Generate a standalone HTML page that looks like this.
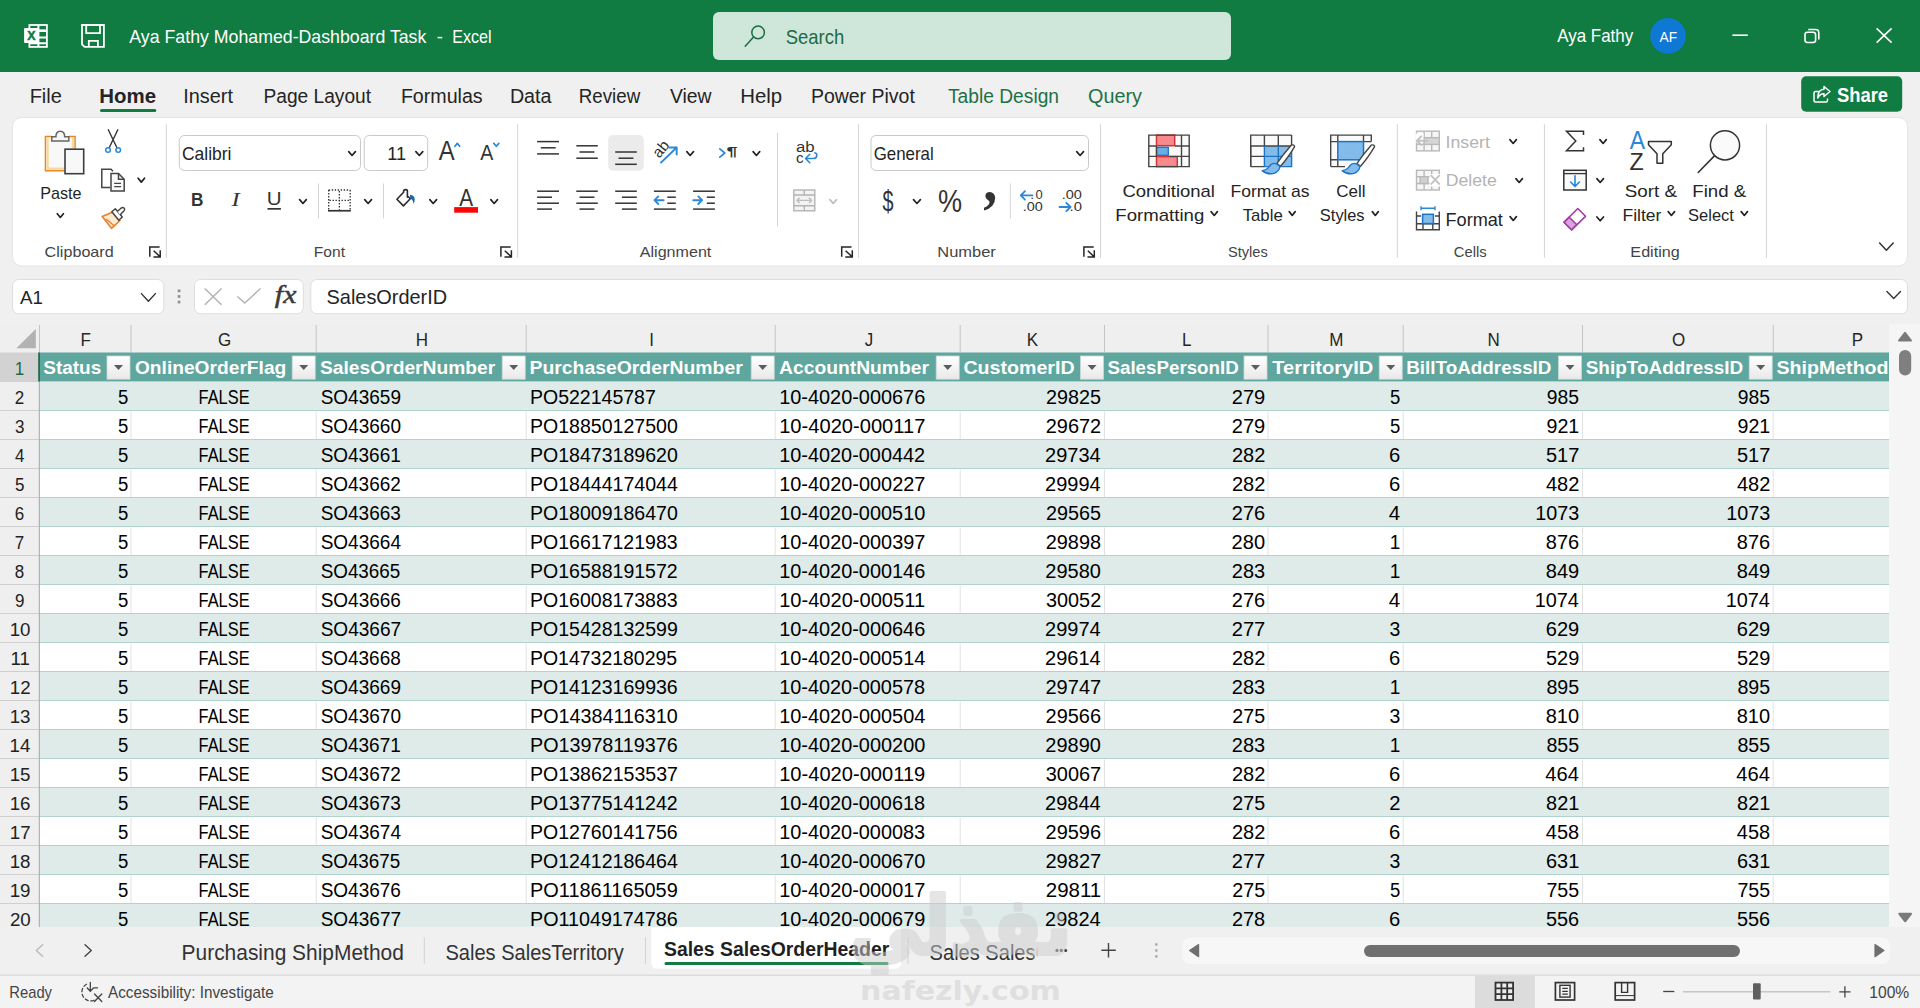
<!DOCTYPE html>
<html lang="en"><head><meta charset="utf-8"><title>Aya Fathy Mohamed-Dashboard Task - Excel</title>
<style>
html,body{margin:0;padding:0;background:#f0f0f0;overflow:hidden}
body{width:1920px;height:1008px;position:relative;font-family:"Liberation Sans",sans-serif}
svg{position:absolute;left:0;top:0;display:block;fill:#242424}
text{font-family:"Liberation Sans",sans-serif;white-space:pre}
text.b{font-weight:700}
text.i{font-style:italic}
text.s{font-family:"Liberation Serif",serif}
text.dj{font-family:"DejaVu Sans",sans-serif}
</style></head><body>
<svg width="1920" height="1008" viewBox="0 0 1920 1008" xml:space="preserve">
<g id="title-bar">
<rect x="0" y="0" width="1920" height="72" fill="#107c41"/>
<g fill="none" stroke="#fff"><rect x="29.4" y="25" width="17.5" height="21.9" stroke-width="1.8"/><path d="M38.4 25 V47" stroke-width="2"/><path d="M29 30.7 H47" stroke-width="2.6"/><path d="M29 37.5 H47 M29 43.3 H47" stroke-width="2"/></g>
<rect x="24.1" y="28" width="14.3" height="15.1" fill="#fff" rx="0.8"/>
<text x="27.2" y="40.4" font-size="12.94" textLength="8.3" lengthAdjust="spacingAndGlyphs" class="b" fill="#107c41" stroke="#107c41" stroke-width="0.5">X</text>
<g fill="none" stroke="#fff" stroke-width="1.8" stroke-linejoin="miter"><path d="M82 25 H103.9 V46.9 H84.6 L82 44.3 Z"/><path d="M86.2 25 V33.2 H100 V25"/><path d="M88.8 46.9 V40.8 H97.9 V46.9"/></g>
<text x="129.36" y="42.8" font-size="18.31" textLength="296.99" lengthAdjust="spacingAndGlyphs" fill="#fff">Aya Fathy Mohamed-Dashboard Task</text>
<text x="436.69" y="42.8" font-size="18.31" textLength="6.1" lengthAdjust="spacingAndGlyphs" fill="#fff">-</text>
<text x="452.18" y="42.8" font-size="18.31" textLength="39.39" lengthAdjust="spacingAndGlyphs" fill="#fff">Excel</text>
<rect x="713" y="12" width="518" height="48" fill="#cfe6da" rx="6"/>
<circle cx="758.1" cy="32.4" r="6.3" fill="none" stroke="#1e6b41" stroke-width="1.5"/>
<line x1="753.6" y1="37" x2="745.2" y2="46.2" stroke="#1e6b41" stroke-width="1.5" stroke-linecap="round"/>
<text x="785.67" y="43.9" font-size="20.2" textLength="58.52" lengthAdjust="spacingAndGlyphs" fill="#1e6b41">Search</text>
<text x="1557.17" y="42.2" font-size="18.6" textLength="76.07" lengthAdjust="spacingAndGlyphs" fill="#fff">Aya Fathy</text>
<circle cx="1668" cy="35.8" r="17.8" fill="#0f78d4"/>
<text x="1659.47" y="41.8" font-size="14.53" textLength="17.58" lengthAdjust="spacingAndGlyphs" fill="#fff">AF</text>
<line x1="1732.4" y1="35.2" x2="1747.8" y2="35.2" stroke="#fff" stroke-width="1.6"/>
<g fill="none" stroke="#fff" stroke-width="1.6"><rect x="1805" y="32.3" width="10.6" height="10.2" rx="2.4"/><path d="M1808.3 29.5 H1815.6 Q1818.8 29.5 1818.8 32.7 V39.4"/></g>
<path d="M1876.6 28.4 L1891.6 42.6 M1891.6 28.4 L1876.6 42.6" stroke="#fff" stroke-width="1.6" fill="none"/>
</g>
<g id="ribbon-tabs">
<rect x="0" y="72" width="1920" height="936" fill="#f0f0f0"/>
<text x="29.66" y="103.2" font-size="19.91" textLength="32.23" lengthAdjust="spacingAndGlyphs" fill="#242424">File</text>
<text x="183.17" y="103.2" font-size="19.91" textLength="49.77" lengthAdjust="spacingAndGlyphs" fill="#242424">Insert</text>
<text x="263.43" y="103.2" font-size="19.91" textLength="107.7" lengthAdjust="spacingAndGlyphs" fill="#242424">Page Layout</text>
<text x="400.89" y="103.2" font-size="19.91" textLength="81.81" lengthAdjust="spacingAndGlyphs" fill="#242424">Formulas</text>
<text x="509.89" y="103.2" font-size="19.91" textLength="41.6" lengthAdjust="spacingAndGlyphs" fill="#242424">Data</text>
<text x="578.76" y="103.2" font-size="19.91" textLength="61.48" lengthAdjust="spacingAndGlyphs" fill="#242424">Review</text>
<text x="669.92" y="103.2" font-size="19.91" textLength="41.63" lengthAdjust="spacingAndGlyphs" fill="#242424">View</text>
<text x="740.23" y="103.2" font-size="19.91" textLength="41.9" lengthAdjust="spacingAndGlyphs" fill="#242424">Help</text>
<text x="810.9" y="103.2" font-size="19.91" textLength="103.92" lengthAdjust="spacingAndGlyphs" fill="#242424">Power Pivot</text>
<text x="99.25" y="103.2" font-size="19.91" textLength="56.75" lengthAdjust="spacingAndGlyphs" class="b" fill="#242424">Home</text>
<rect x="100" y="109" width="56.3" height="3" fill="#107c41" rx="1.5"/>
<text x="947.98" y="103.2" font-size="19.91" textLength="111.06" lengthAdjust="spacingAndGlyphs" fill="#1e7145">Table Design</text>
<text x="1088.07" y="103.2" font-size="19.91" textLength="53.87" lengthAdjust="spacingAndGlyphs" fill="#1e7145">Query</text>
<rect x="1801.2" y="76.2" width="101" height="35.6" fill="#107c41" rx="5"/>
<g fill="none" stroke="#fff" stroke-width="1.5" stroke-linejoin="round" stroke-linecap="round"><path d="M1818.5 91.5 H1815.5 Q1814 91.5 1814 93 V100.5 Q1814 102 1815.5 102 H1826 Q1827.5 102 1827.5 100.5 V99"/><path d="M1824 86.5 L1830 91.5 L1824 96.5 V93.7 Q1819.5 93.7 1817.8 98 Q1817.8 89.5 1824 89.3 Z"/></g>
<text x="1836.88" y="101.9" font-size="19.33" textLength="51.15" lengthAdjust="spacingAndGlyphs" class="b" fill="#fff">Share</text>
</g>
<rect x="12.5" y="117.5" width="1895" height="148.5" fill="#fff" rx="9" stroke="#e4e4e4" stroke-width="1"/>
<g id="group-clipboard">
<path d="M45.3 136.4 H75.2 V149 H64.3 V170.8 H45.3 Z" fill="#f8f8f8"/><path d="M47.6 138 V168.6 H64 M73 138 V148.6" fill="none" stroke="#fbd79a" stroke-width="2.2"/><path d="M52 136.5 H45.4 V170.8 H64.3 M69 136.5 H75.1 V148.8" fill="none" stroke="#e48a22" stroke-width="1.4"/><path d="M51.8 141 V136.8 H55.9 Q56 131.3 60.3 131.3 Q64.6 131.3 64.7 136.8 H68.8 V141 Z" fill="#f6f6f6" stroke="#666" stroke-width="1.5"/><rect x="65" y="149.2" width="18.7" height="24.5" fill="#f8f8f8" stroke="#3d3d3d" stroke-width="1.6"/>
<text x="40.18" y="198.6" font-size="17.15" textLength="41.23" lengthAdjust="spacingAndGlyphs" fill="#242424">Paste</text>
<path d="M57.3 213.75 L60.35 217.45 L63.4 213.75" fill="none" stroke="#222" stroke-width="1.7" stroke-linecap="round" stroke-linejoin="round"/>
<g fill="none" stroke="#333" stroke-width="1.4" stroke-linecap="round"><path d="M108.3 129.8 L116.8 147.5 M117.8 129.8 L109.3 147.5"/></g><circle cx="108" cy="150" r="2.3" fill="none" stroke="#2b88d8" stroke-width="1.5"/><circle cx="118.2" cy="150" r="2.3" fill="none" stroke="#2b88d8" stroke-width="1.5"/>
<g fill="none" stroke="#444" stroke-width="1.5"><path d="M110 187.5 H101.8 V169.3 H111 L113 171.3"/><path d="M111 173.5 H118.5 L124.2 179.2 V191 H111 Z" fill="#fafafa"/><path d="M118.5 173.5 V179.2 H124.2" /><path d="M114.2 183.3 H121 M114.2 186.6 H121" stroke-width="1.2"/></g>
<path d="M138.1 178.25 L141.3 182.15 L144.5 178.25" fill="none" stroke="#222" stroke-width="1.7" stroke-linecap="round" stroke-linejoin="round"/>
<g stroke-linejoin="round"><path d="M102.2 216.5 L113 212 L120 220.5 L111.5 228.3 Z" fill="#fce9d2" stroke="#e8802a" stroke-width="1.6"/><path d="M106 219 L114.5 226" stroke="#e8802a" stroke-width="1.3" fill="none"/><path d="M111.8 211.8 L115.3 208.7 L122.3 217 L118.8 220.2 Z" fill="#fff" stroke="#444" stroke-width="1.5"/><path d="M117.5 211.3 L121.3 208 Q123.5 206.8 124.5 208.6 Q125.2 210.2 123.3 211.6 L120 215" fill="#fff" stroke="#444" stroke-width="1.5"/></g>
<text x="44.59" y="256.7" font-size="15.12" textLength="69.15" lengthAdjust="spacingAndGlyphs" fill="#444">Clipboard</text>
<path d="M149.8 256.7 V246.9 H159.6" fill="none" stroke="#262626" stroke-width="1.5"/>
<path d="M153.7 250.7 L160.2 256.9 M160.2 250.3 V257 H153.4" fill="none" stroke="#262626" stroke-width="1.5"/>
<line x1="166.3" y1="124.3" x2="166.3" y2="257.8" stroke="#d4d4d4" stroke-width="1"/>
</g>
<g id="group-font">
<rect x="179.3" y="135.5" width="181.2" height="35" fill="#fff" rx="5" stroke="#c9c9c9" stroke-width="1"/>
<text x="181.93" y="159.7" font-size="18.17" textLength="49.55" lengthAdjust="spacingAndGlyphs" fill="#242424">Calibri</text>
<path d="M348.7 151.65 L352.05 155.45 L355.4 151.65" fill="none" stroke="#222" stroke-width="1.7" stroke-linecap="round" stroke-linejoin="round"/>
<rect x="364.2" y="135.5" width="63.5" height="35" fill="#fff" rx="5" stroke="#c9c9c9" stroke-width="1"/>
<text x="387.22" y="159.7" font-size="18.17" textLength="18.85" lengthAdjust="spacingAndGlyphs" fill="#242424">11</text>
<path d="M415.9 151.65 L419.35 155.45 L422.8 151.65" fill="none" stroke="#222" stroke-width="1.7" stroke-linecap="round" stroke-linejoin="round"/>
<text x="438.75" y="160.4" font-size="27.91" textLength="15.9" lengthAdjust="spacingAndGlyphs" fill="#333">A</text>
<path d="M454.9 146.25 L457.3 143.35 L459.7 146.25" fill="none" stroke="#2b88d8" stroke-width="1.7" stroke-linecap="round" stroke-linejoin="round"/>
<text x="480.16" y="160.4" font-size="21.8" textLength="13.08" lengthAdjust="spacingAndGlyphs" fill="#333">A</text>
<path d="M493.8 143.35 L496.3 146.25 L498.8 143.35" fill="none" stroke="#2b88d8" stroke-width="1.7" stroke-linecap="round" stroke-linejoin="round"/>
<text x="191.07" y="206.1" font-size="18.9" textLength="12.41" lengthAdjust="spacingAndGlyphs" class="b" fill="#333">B</text>
<text x="231.6" y="206.3" font-size="19.77" textLength="8.21" lengthAdjust="spacingAndGlyphs" class="i s" fill="#333">I</text>
<text x="266.72" y="204.8" font-size="18.02" textLength="14.85" lengthAdjust="spacingAndGlyphs" fill="#333">U</text>
<rect x="267.5" y="208" width="13.4" height="1.7" fill="#333"/>
<path d="M299.6 199.65 L302.95 203.45 L306.3 199.65" fill="none" stroke="#222" stroke-width="1.7" stroke-linecap="round" stroke-linejoin="round"/>
<line x1="318.5" y1="183.5" x2="318.5" y2="218.4" stroke="#d4d4d4" stroke-width="1"/>
<g stroke="#333" fill="none" stroke-width="1.3" stroke-dasharray="1.4 1.6"><path d="M328.7 190 H350.2 M328.7 190 V209.8 M350.2 190 V209.8 M339.4 191 V209.8 M329.5 200.3 H350"/></g>
<rect x="328" y="209.9" width="22.8" height="1.7" fill="#333"/>
<path d="M364.7 199.65 L368.1 203.45 L371.5 199.65" fill="none" stroke="#222" stroke-width="1.7" stroke-linecap="round" stroke-linejoin="round"/>
<line x1="383.5" y1="183.5" x2="383.5" y2="218.4" stroke="#d4d4d4" stroke-width="1"/>
<path d="M407.4 197.2 V191.1 Q407.4 189.6 405.5 189.6 Q403.6 189.6 403.6 191.4 V192.3 L396.9 199.2 L403.4 205.9 L410.3 198.8 L408.4 196.8" fill="none" stroke="#2b2b2b" stroke-width="1.6" stroke-linejoin="round" stroke-linecap="round"/><path d="M410 194.8 Q414.9 195.2 414.7 200 Q414.5 202.6 413.5 203.9 Q413.2 199.8 410.2 198.2 Z" fill="#1567b5"/>
<path d="M429.8 199.65 L433.2 203.45 L436.6 199.65" fill="none" stroke="#222" stroke-width="1.7" stroke-linecap="round" stroke-linejoin="round"/>
<text x="459.36" y="205.5" font-size="23.26" textLength="13.88" lengthAdjust="spacingAndGlyphs" fill="#333">A</text>
<rect x="454.2" y="207.1" width="23.8" height="5.6" fill="#fb0509"/>
<path d="M490.8 199.65 L494.15 203.45 L497.5 199.65" fill="none" stroke="#222" stroke-width="1.7" stroke-linecap="round" stroke-linejoin="round"/>
<text x="313.82" y="256.7" font-size="15.12" textLength="31.19" lengthAdjust="spacingAndGlyphs" fill="#444">Font</text>
<path d="M500.9 256.7 V246.9 H510.7" fill="none" stroke="#262626" stroke-width="1.5"/>
<path d="M504.8 250.7 L511.4 256.9 M511.4 250.3 V257 H504.5" fill="none" stroke="#262626" stroke-width="1.5"/>
<line x1="517.7" y1="124.3" x2="517.7" y2="257.8" stroke="#d4d4d4" stroke-width="1"/>
</g>
<g id="group-alignment">
<line x1="537.1" y1="141.6" x2="559" y2="141.6" stroke="#333" stroke-width="1.5"/>
<line x1="540.8" y1="147.8" x2="555.7" y2="147.8" stroke="#333" stroke-width="1.5"/>
<line x1="537.1" y1="153.9" x2="559" y2="153.9" stroke="#333" stroke-width="1.5"/>
<line x1="576.3" y1="145.8" x2="597.8" y2="145.8" stroke="#333" stroke-width="1.5"/>
<line x1="579.5" y1="152" x2="594.4" y2="152" stroke="#333" stroke-width="1.5"/>
<line x1="576.3" y1="158.2" x2="597.8" y2="158.2" stroke="#333" stroke-width="1.5"/>
<rect x="608.1" y="135.1" width="35.7" height="35.7" fill="#ebebeb" rx="5"/>
<line x1="615.2" y1="152" x2="636.8" y2="152" stroke="#333" stroke-width="1.5"/>
<line x1="618.5" y1="158.2" x2="633.4" y2="158.2" stroke="#333" stroke-width="1.5"/>
<line x1="615.2" y1="164.3" x2="636.8" y2="164.3" stroke="#333" stroke-width="1.5"/>
<g transform="translate(659.3 158.8) rotate(-50)"><text x="0" y="0" font-size="15.5" textLength="17" lengthAdjust="spacingAndGlyphs" fill="#333">ab</text></g>
<path d="M661 162.6 L676.4 147.8 M669.6 147.5 H676.7 V154.5" fill="none" stroke="#2b88d8" stroke-width="1.9" stroke-linecap="round" stroke-linejoin="round"/>
<path d="M686.8 151.65 L690.15 155.45 L693.5 151.65" fill="none" stroke="#222" stroke-width="1.7" stroke-linecap="round" stroke-linejoin="round"/>
<path d="M719.8 148.8 L724.8 153 L719.8 157.2" fill="none" stroke="#2b88d8" stroke-width="1.7" stroke-linecap="round" stroke-linejoin="round"/>
<text x="726.43" y="156.2" font-size="13.37" textLength="11.03" lengthAdjust="spacingAndGlyphs" class="b" fill="#333">¶</text>
<path d="M753.1 151.65 L756.4 155.45 L759.7 151.65" fill="none" stroke="#222" stroke-width="1.7" stroke-linecap="round" stroke-linejoin="round"/>
<line x1="537.1" y1="191.2" x2="559" y2="191.2" stroke="#333" stroke-width="1.5"/>
<line x1="537.1" y1="197.2" x2="552" y2="197.2" stroke="#333" stroke-width="1.5"/>
<line x1="537.1" y1="203.2" x2="559" y2="203.2" stroke="#333" stroke-width="1.5"/>
<line x1="537.1" y1="209.1" x2="552" y2="209.1" stroke="#333" stroke-width="1.5"/>
<line x1="576.3" y1="191.2" x2="597.8" y2="191.2" stroke="#333" stroke-width="1.5"/>
<line x1="579.5" y1="197.2" x2="594.4" y2="197.2" stroke="#333" stroke-width="1.5"/>
<line x1="576.3" y1="203.2" x2="597.8" y2="203.2" stroke="#333" stroke-width="1.5"/>
<line x1="579.5" y1="209.1" x2="594.4" y2="209.1" stroke="#333" stroke-width="1.5"/>
<line x1="615.2" y1="191.2" x2="636.8" y2="191.2" stroke="#333" stroke-width="1.5"/>
<line x1="621.9" y1="197.2" x2="636.8" y2="197.2" stroke="#333" stroke-width="1.5"/>
<line x1="615.2" y1="203.2" x2="636.8" y2="203.2" stroke="#333" stroke-width="1.5"/>
<line x1="621.9" y1="209.1" x2="636.8" y2="209.1" stroke="#333" stroke-width="1.5"/>
<line x1="653.9" y1="191.2" x2="675.8" y2="191.2" stroke="#333" stroke-width="1.5"/>
<line x1="667.3" y1="197.2" x2="675.8" y2="197.2" stroke="#333" stroke-width="1.5"/>
<line x1="667.3" y1="203.2" x2="675.8" y2="203.2" stroke="#333" stroke-width="1.5"/>
<line x1="653.9" y1="209.1" x2="675.8" y2="209.1" stroke="#333" stroke-width="1.5"/>
<path d="M663.6 200.2 H654.6 M658.3 196.4 L654.5 200.2 L658.3 204" fill="none" stroke="#2b88d8" stroke-width="1.9" stroke-linecap="round" stroke-linejoin="round"/>
<line x1="693.1" y1="191.2" x2="714.9" y2="191.2" stroke="#333" stroke-width="1.5"/>
<line x1="706.8" y1="197.2" x2="714.9" y2="197.2" stroke="#333" stroke-width="1.5"/>
<line x1="706.8" y1="203.2" x2="714.9" y2="203.2" stroke="#333" stroke-width="1.5"/>
<line x1="693.1" y1="209.1" x2="714.9" y2="209.1" stroke="#333" stroke-width="1.5"/>
<path d="M693.3 200.2 H702 M698.3 196.4 L702.1 200.2 L698.3 204" fill="none" stroke="#2b88d8" stroke-width="1.9" stroke-linecap="round" stroke-linejoin="round"/>
<line x1="777.5" y1="132.9" x2="777.5" y2="226.6" stroke="#d4d4d4" stroke-width="1"/>
<text x="795.99" y="151.5" font-size="14" textLength="18.7" lengthAdjust="spacingAndGlyphs" fill="#333">ab</text>
<text x="796.06" y="162.7" font-size="14" textLength="7.64" lengthAdjust="spacingAndGlyphs" fill="#333">c</text>
<path d="M805.6 158.5 H813.5 Q816.8 158.3 816.8 155.3 Q816.8 153.2 814.8 152.8 M809.8 154.3 L805.5 158.5 L809.8 162.8" fill="none" stroke="#2b88d8" stroke-width="1.6" stroke-linecap="round" stroke-linejoin="round"/>
<g fill="#f3f3f3" stroke="#b4b4b4" stroke-width="1.4"><rect x="793.8" y="190" width="21" height="20.8"/><path d="M793.8 195 H814.8 M793.8 205.8 H814.8 M804.3 190 V195 M804.3 205.8 V210.8" fill="none"/><path d="M797 200.4 H811.6 M799.6 197.8 L797 200.4 L799.6 203 M809 197.8 L811.6 200.4 L809 203" fill="none" stroke="#bdbdbd"/></g>
<path d="M829.9 199.65 L833.25 203.45 L836.6 199.65" fill="none" stroke="#bdbdbd" stroke-width="1.7" stroke-linecap="round" stroke-linejoin="round"/>
<text x="639.77" y="256.7" font-size="15.12" textLength="71.54" lengthAdjust="spacingAndGlyphs" fill="#444">Alignment</text>
<path d="M841.7 256.7 V246.9 H851.5" fill="none" stroke="#262626" stroke-width="1.5"/>
<path d="M845.6 250.7 L852.3 256.9 M852.3 250.3 V257 H845.3" fill="none" stroke="#262626" stroke-width="1.5"/>
<line x1="858.6" y1="124.3" x2="858.6" y2="257.8" stroke="#d4d4d4" stroke-width="1"/>
</g>
<g id="group-number">
<rect x="871" y="135.5" width="217.5" height="35" fill="#fff" rx="5" stroke="#c9c9c9" stroke-width="1"/>
<text x="873.76" y="159.7" font-size="18.17" textLength="59.97" lengthAdjust="spacingAndGlyphs" fill="#242424">General</text>
<path d="M1076.7 151.65 L1080.1 155.45 L1083.5 151.65" fill="none" stroke="#222" stroke-width="1.7" stroke-linecap="round" stroke-linejoin="round"/>
<text x="882.5" y="211.07" font-size="29.42" textLength="11" lengthAdjust="spacingAndGlyphs" fill="#333">$</text>
<path d="M913.5 199.65 L916.95 203.45 L920.4 199.65" fill="none" stroke="#222" stroke-width="1.7" stroke-linecap="round" stroke-linejoin="round"/>
<text x="937.95" y="211.91" font-size="30.86" textLength="24.1" lengthAdjust="spacingAndGlyphs" fill="#333">%</text>
<text x="983.37" y="201.06" font-size="60.26" textLength="14.07" lengthAdjust="spacingAndGlyphs" class="b s" fill="#333">,</text>
<line x1="1010.3" y1="183.5" x2="1010.3" y2="218.4" stroke="#d4d4d4" stroke-width="1"/>
<text x="1035.4" y="198.7" font-size="13.6" textLength="7.2" lengthAdjust="spacingAndGlyphs" fill="#333">0</text>
<text x="1030.26" y="198.7" font-size="13.6" textLength="3.78" lengthAdjust="spacingAndGlyphs" fill="#333">.</text>
<text x="1022.69" y="211.4" font-size="13.6" textLength="20.06" lengthAdjust="spacingAndGlyphs" fill="#333">.00</text>
<path d="M1021 195.4 H1032.5 M1025 191.2 L1020.8 195.4 L1025 199.6" fill="none" stroke="#2b88d8" stroke-width="1.8" stroke-linecap="round" stroke-linejoin="round"/>
<text x="1061.78" y="198.7" font-size="13.6" textLength="20.17" lengthAdjust="spacingAndGlyphs" fill="#333">.00</text>
<text x="1069.54" y="211.4" font-size="13.6" textLength="12.42" lengthAdjust="spacingAndGlyphs" fill="#333">.0</text>
<path d="M1059.5 207 H1070.5 M1066.3 202.8 L1070.6 207 L1066.3 211.2" fill="none" stroke="#2b88d8" stroke-width="1.8" stroke-linecap="round" stroke-linejoin="round"/>
<text x="937.25" y="256.7" font-size="15.12" textLength="58.61" lengthAdjust="spacingAndGlyphs" fill="#444">Number</text>
<path d="M1083.9 256.7 V246.9 H1093.7" fill="none" stroke="#262626" stroke-width="1.5"/>
<path d="M1087.8 250.7 L1094.3 256.9 M1094.3 250.3 V257 H1087.5" fill="none" stroke="#262626" stroke-width="1.5"/>
<line x1="1100.5" y1="124.3" x2="1100.5" y2="257.8" stroke="#d4d4d4" stroke-width="1"/>
</g>
<g id="group-styles">
<rect x="1148.8" y="135.1" width="40.4" height="31.5" fill="#fafafa"/>
<rect x="1156.5" y="135.1" width="18.2" height="10.6" fill="#f8898c" stroke="#d13438" stroke-width="1.5"/>
<rect x="1156.5" y="156.6" width="20.8" height="10" fill="#f8898c" stroke="#d13438" stroke-width="1.5"/>
<rect x="1156.5" y="147.3" width="11.8" height="8" fill="#69afe5" stroke="#1e74c4" stroke-width="1.3"/>
<g stroke="#444" stroke-width="1.4" fill="none"><path d="M1148.8 135.1 H1189.2 V166.6 H1148.8 Z"/><path d="M1148.8 146 H1156 M1148.8 156.4 H1156 M1156.5 146 V156.5 M1175 146 H1189.2 M1169 156.4 H1189.2 M1181.5 135.1 V166.6 M1177.5 156.4 H1189"/></g>
<text x="1122.48" y="197" font-size="17.15" textLength="92.45" lengthAdjust="spacingAndGlyphs" fill="#242424">Conditional</text>
<text x="1115.37" y="221.3" font-size="17.15" textLength="88.92" lengthAdjust="spacingAndGlyphs" fill="#242424">Formatting</text>
<path d="M1211.1 211.65 L1214.25 215.45 L1217.4 211.65" fill="none" stroke="#222" stroke-width="1.7" stroke-linecap="round" stroke-linejoin="round"/>
<rect x="1250.7" y="135.1" width="40.9" height="31.5" fill="#fafafa"/>
<rect x="1264.4" y="146" width="27.2" height="20.6" fill="#83bbeb"/>
<g stroke="#444" stroke-width="1.4" fill="none"><path d="M1250.7 166.6 V135.1 H1291.6 M1291.6 135.1 V146 H1250.7"/><path d="M1264.4 135.1 V146 M1278.3 135.1 V146 M1250.7 156.4 H1264.4 M1250.7 166.6 H1264.4 M1250.7 146 V166.6"/></g>
<g stroke="#1e74c4" stroke-width="1.4" fill="none"><path d="M1264.4 146 V166.6 H1291.6 V146 M1278.3 146 V166.6 M1264.4 156.4 H1291.6"/></g>
<g transform="translate(0 0)"><path d="M1291.2 145.2 Q1294.2 144.2 1294.6 146.6 Q1287.5 158.5 1280.5 166.2 L1276.8 163.6 Q1283 154.5 1291.2 145.2 Z" fill="#fff" stroke="#444" stroke-width="1.4" stroke-linejoin="round"/><path d="M1276.4 163.8 Q1272.2 162.3 1269.6 166 Q1267.6 169.8 1262.2 170.6 Q1266.8 174.6 1273 173.6 Q1279.2 172 1280 166.4 Z" fill="#83bbeb" stroke="#1e74c4" stroke-width="1.4" stroke-linejoin="round"/></g>
<text x="1230.56" y="197" font-size="17.15" textLength="78.97" lengthAdjust="spacingAndGlyphs" fill="#242424">Format as</text>
<text x="1242.63" y="221.3" font-size="17.15" textLength="40.12" lengthAdjust="spacingAndGlyphs" fill="#242424">Table</text>
<path d="M1289.2 211.65 L1292.2 215.45 L1295.2 211.65" fill="none" stroke="#222" stroke-width="1.7" stroke-linecap="round" stroke-linejoin="round"/>
<rect x="1330.7" y="135.1" width="40.6" height="31.5" fill="#fafafa"/>
<rect x="1337.8" y="141.6" width="25.7" height="18.2" fill="#83bbeb" stroke="#1e74c4" stroke-width="1.5"/>
<g stroke="#444" stroke-width="1.4" fill="none"><path d="M1330.7 166.6 V135.1 H1371.3 V141.6 M1330.7 141.6 H1337.3 M1364 141.6 H1371.3 M1337.8 135.1 V141 M1363.5 135.1 V141 M1330.7 159.8 H1337.3 M1337.8 160.3 V166.6 M1330.7 166.6 H1345"/></g>
<g transform="translate(80 0)"><path d="M1291.2 145.2 Q1294.2 144.2 1294.6 146.6 Q1287.5 158.5 1280.5 166.2 L1276.8 163.6 Q1283 154.5 1291.2 145.2 Z" fill="#fff" stroke="#444" stroke-width="1.4" stroke-linejoin="round"/><path d="M1276.4 163.8 Q1272.2 162.3 1269.6 166 Q1267.6 169.8 1262.2 170.6 Q1266.8 174.6 1273 173.6 Q1279.2 172 1280 166.4 Z" fill="#83bbeb" stroke="#1e74c4" stroke-width="1.4" stroke-linejoin="round"/></g>
<text x="1336.35" y="197" font-size="17.15" textLength="29.27" lengthAdjust="spacingAndGlyphs" fill="#242424">Cell</text>
<text x="1319.86" y="221.3" font-size="17.15" textLength="44.73" lengthAdjust="spacingAndGlyphs" fill="#242424">Styles</text>
<path d="M1372.3 211.65 L1375.3 215.45 L1378.3 211.65" fill="none" stroke="#222" stroke-width="1.7" stroke-linecap="round" stroke-linejoin="round"/>
<text x="1227.94" y="257" font-size="15.12" textLength="39.79" lengthAdjust="spacingAndGlyphs" fill="#444">Styles</text>
<line x1="1397.3" y1="124.3" x2="1397.3" y2="257.8" stroke="#d4d4d4" stroke-width="1"/>
</g>
<g id="group-cells">
<g stroke="#b9b9b9" stroke-width="1.4" fill="none"><rect x="1416.5" y="131.2" width="22.8" height="19.7" fill="#f6f6f6"/><path d="M1416.5 137.7 H1439.3 M1416.5 144.4 H1439.3 M1424.1 131.2 V150.9 M1431.7 131.2 V150.9"/></g>
<rect x="1424.1" y="137.7" width="15.2" height="6.7" fill="#d6d6d6" stroke="#b9b9b9" stroke-width="1.4"/>
<rect x="1415.5" y="133.5" width="8" height="9" fill="#fff"/>
<path d="M1417 140.7 H1427.4 M1421.2 136.4 L1416.9 140.7 L1421.2 145" fill="none" stroke="#c2c2c2" stroke-width="2" stroke-linecap="round" stroke-linejoin="round"/>
<text x="1445.57" y="147.7" font-size="16.86" textLength="44.25" lengthAdjust="spacingAndGlyphs" fill="#b3b3b3">Insert</text>
<path d="M1509.9 139.65 L1513.15 143.45 L1516.4 139.65" fill="none" stroke="#222" stroke-width="1.7" stroke-linecap="round" stroke-linejoin="round"/>
<g stroke="#b9b9b9" stroke-width="1.4" fill="none"><rect x="1416.5" y="170.3" width="22.8" height="19.7" fill="#f6f6f6"/><path d="M1416.5 176.8 H1439.3 M1416.5 183.5 H1439.3 M1424.1 170.3 V190 M1431.7 170.3 V190"/></g>
<rect x="1420" y="176.8" width="8" height="6.7" fill="#d0d0d0" stroke="#b9b9b9" stroke-width="1.4"/>
<rect x="1429.5" y="174" width="11.5" height="12.5" fill="#fff"/>
<path d="M1431.2 175.6 L1439.2 183.9 M1439.2 175.6 L1431.2 183.9" fill="none" stroke="#c2c2c2" stroke-width="1.9" stroke-linecap="round"/>
<text x="1445.75" y="186.3" font-size="16.86" textLength="51.04" lengthAdjust="spacingAndGlyphs" fill="#b3b3b3">Delete</text>
<path d="M1515.9 178.65 L1519.15 182.45 L1522.4 178.65" fill="none" stroke="#222" stroke-width="1.7" stroke-linecap="round" stroke-linejoin="round"/>
<g stroke="#444" stroke-width="1.4" fill="none"><path d="M1416.5 211.5 V229.8 H1439.3 V211.5 M1416.5 223.8 H1439.3 M1416.5 216 H1421 M1435 216 H1439.3 M1423 224 V229.8 M1432.8 224 V229.8"/></g>
<rect x="1422.6" y="214.3" width="10.8" height="9.3" fill="#83bbeb" stroke="#1e74c4" stroke-width="1.5"/>
<path d="M1421 208.2 H1435 M1421 206.3 V210.2 M1435 206.3 V210.2" fill="none" stroke="#2b88d8" stroke-width="1.4"/>
<text x="1445.51" y="225.5" font-size="17.44" textLength="57.41" lengthAdjust="spacingAndGlyphs" fill="#242424">Format</text>
<path d="M1510.1 216.65 L1513.25 220.45 L1516.4 216.65" fill="none" stroke="#222" stroke-width="1.7" stroke-linecap="round" stroke-linejoin="round"/>
<text x="1453.76" y="257" font-size="15.12" textLength="32.87" lengthAdjust="spacingAndGlyphs" fill="#444">Cells</text>
<line x1="1544.4" y1="124.3" x2="1544.4" y2="257.8" stroke="#d4d4d4" stroke-width="1"/>
</g>
<g id="group-editing">
<path d="M1583.5 135 V131.3 H1566.5 L1575.8 141 L1566.5 150.8 H1583.5 V147.2" fill="none" stroke="#333" stroke-width="1.5" stroke-linejoin="miter"/>
<path d="M1599.9 139.65 L1603.1 143.45 L1606.3 139.65" fill="none" stroke="#222" stroke-width="1.7" stroke-linecap="round" stroke-linejoin="round"/>
<rect x="1563.8" y="170.3" width="22.4" height="19.7" fill="#fafafa" stroke="#333" stroke-width="1.5"/><path d="M1563.8 173.6 H1586.2" stroke="#333" stroke-width="1.3"/>
<path d="M1575 175.8 V186.3 M1570.6 182 L1575 186.4 L1579.4 182" fill="none" stroke="#2b88d8" stroke-width="1.6" stroke-linecap="round" stroke-linejoin="round"/>
<path d="M1596.9 178.65 L1600.2 182.45 L1603.5 178.65" fill="none" stroke="#222" stroke-width="1.7" stroke-linecap="round" stroke-linejoin="round"/>
<path d="M1577.8 208.5 L1585.5 216.3 L1571.5 229.8 L1564 222.3 Z" fill="#fff" stroke="#a23aa8" stroke-width="1.6" stroke-linejoin="round"/><path d="M1569.3 217.2 L1576.8 224.7 L1571.5 229.8 L1564 222.3 Z" fill="#dba3de" stroke="#a23aa8" stroke-width="1.6" stroke-linejoin="round"/>
<path d="M1596.9 216.95 L1600.2 220.75 L1603.5 216.95" fill="none" stroke="#222" stroke-width="1.7" stroke-linecap="round" stroke-linejoin="round"/>
<text x="1629.75" y="149.2" font-size="25" textLength="15.29" lengthAdjust="spacingAndGlyphs" fill="#2b88d8">A</text>
<text x="1629.58" y="170.2" font-size="24.42" textLength="14.24" lengthAdjust="spacingAndGlyphs" fill="#333">Z</text>
<path d="M1648.5 141.5 H1671.3 V144.8 L1662.8 153.8 V163.3 H1657 V153.8 L1648.5 144.8 Z" fill="#fafafa" stroke="#333" stroke-width="1.5" stroke-linejoin="round"/>
<text x="1624.75" y="197" font-size="17.15" textLength="52.22" lengthAdjust="spacingAndGlyphs" fill="#242424">Sort &amp;</text>
<text x="1622.46" y="221.3" font-size="17.15" textLength="38.92" lengthAdjust="spacingAndGlyphs" fill="#242424">Filter</text>
<path d="M1668.2 211.65 L1671.4 215.45 L1674.6 211.65" fill="none" stroke="#222" stroke-width="1.7" stroke-linecap="round" stroke-linejoin="round"/>
<circle cx="1725" cy="145.3" r="14.6" fill="#fafafa" stroke="#333" stroke-width="1.5"/>
<line x1="1714.4" y1="155.9" x2="1698.2" y2="172.5" stroke="#333" stroke-width="1.6" stroke-linecap="round"/>
<text x="1692.27" y="197" font-size="17.15" textLength="53.81" lengthAdjust="spacingAndGlyphs" fill="#242424">Find &amp;</text>
<text x="1688.06" y="221.3" font-size="17.15" textLength="45.86" lengthAdjust="spacingAndGlyphs" fill="#242424">Select</text>
<path d="M1741.2 211.65 L1744.35 215.45 L1747.5 211.65" fill="none" stroke="#222" stroke-width="1.7" stroke-linecap="round" stroke-linejoin="round"/>
<text x="1630.38" y="257" font-size="15.12" textLength="49.37" lengthAdjust="spacingAndGlyphs" fill="#444">Editing</text>
<line x1="1766.4" y1="124.3" x2="1766.4" y2="257.8" stroke="#d4d4d4" stroke-width="1"/>
<path d="M1879.6 243 L1886.4 250.2 L1893.2 243" fill="none" stroke="#333" stroke-width="1.5" stroke-linecap="round" stroke-linejoin="round"/>
</g>
<g id="formula-bar">
<rect x="12.5" y="279.5" width="151.3" height="34.2" fill="#fff" rx="6" stroke="#dedede" stroke-width="1"/>
<text x="19.96" y="303.7" font-size="18.9" textLength="22.94" lengthAdjust="spacingAndGlyphs" fill="#242424">A1</text>
<path d="M141.4 293.6 L148.4 301.2 L155.4 293.6" fill="none" stroke="#333" stroke-width="1.4" stroke-linecap="round" stroke-linejoin="round"/>
<rect x="177.7" y="289.5" width="2.7" height="2.7" fill="#8f8f8f"/>
<rect x="177.7" y="295.1" width="2.7" height="2.7" fill="#8f8f8f"/>
<rect x="177.7" y="300.7" width="2.7" height="2.7" fill="#8f8f8f"/>
<rect x="194.5" y="279.5" width="108.8" height="34.2" fill="#fff" rx="6" stroke="#dedede" stroke-width="1"/>
<path d="M204.8 288.5 L221.5 304.8 M221.5 288.5 L204.8 304.8" fill="none" stroke="#b4b4b4" stroke-width="1.5"/>
<path d="M237.3 296.5 L244.8 303 L260.5 288.5" fill="none" stroke="#b4b4b4" stroke-width="1.5"/>
<text x="274.87" y="302.72" font-size="25.74" textLength="21.53" lengthAdjust="spacingAndGlyphs" class="i s" fill="#3a3a3a" stroke="#3a3a3a" stroke-width="0.5">fx</text>
<rect x="310.8" y="279.5" width="1596.7" height="34.2" fill="#fff" rx="6" stroke="#dedede" stroke-width="1"/>
<text x="326.6" y="303.7" font-size="19.48" textLength="120.54" lengthAdjust="spacingAndGlyphs" fill="#242424">SalesOrderID</text>
<path d="M1886.9 291.4 L1893.7 298.6 L1900.5 291.4" fill="none" stroke="#333" stroke-width="1.4" stroke-linecap="round" stroke-linejoin="round"/>
</g>
<g id="grid">
<rect x="0" y="324" width="1889" height="604" fill="#efefef"/>
<path d="M35.8 329 V348.3 H16.3 Z" fill="#b2b2b2"/>
<text x="80.5" y="346.2" font-size="18.9" textLength="10.39" lengthAdjust="spacingAndGlyphs" fill="#262626">F</text>
<text x="217.99" y="346.2" font-size="18.9" textLength="13.23" lengthAdjust="spacingAndGlyphs" fill="#262626">G</text>
<text x="415.85" y="346.2" font-size="18.9" textLength="12.28" lengthAdjust="spacingAndGlyphs" fill="#262626">H</text>
<text x="649.14" y="346.2" font-size="18.9" textLength="4.72" lengthAdjust="spacingAndGlyphs" fill="#262626">I</text>
<text x="864.75" y="346.2" font-size="18.9" textLength="8.5" lengthAdjust="spacingAndGlyphs" fill="#262626">J</text>
<text x="1026.87" y="346.2" font-size="18.9" textLength="11.34" lengthAdjust="spacingAndGlyphs" fill="#262626">K</text>
<text x="1181.91" y="346.2" font-size="18.9" textLength="9.46" lengthAdjust="spacingAndGlyphs" fill="#262626">L</text>
<text x="1329.32" y="346.2" font-size="18.9" textLength="14.17" lengthAdjust="spacingAndGlyphs" fill="#262626">M</text>
<text x="1487.5" y="346.2" font-size="18.9" textLength="12.28" lengthAdjust="spacingAndGlyphs" fill="#262626">N</text>
<text x="1672.04" y="346.2" font-size="18.9" textLength="13.23" lengthAdjust="spacingAndGlyphs" fill="#262626">O</text>
<text x="1851.67" y="346.2" font-size="18.9" textLength="11.34" lengthAdjust="spacingAndGlyphs" fill="#262626">P</text>
<line x1="39.5" y1="325" x2="39.5" y2="352.5" stroke="#c4c4c4" stroke-width="1"/>
<line x1="131" y1="325" x2="131" y2="352.5" stroke="#c4c4c4" stroke-width="1"/>
<line x1="316.2" y1="325" x2="316.2" y2="352.5" stroke="#c4c4c4" stroke-width="1"/>
<line x1="526.2" y1="325" x2="526.2" y2="352.5" stroke="#c4c4c4" stroke-width="1"/>
<line x1="775.2" y1="325" x2="775.2" y2="352.5" stroke="#c4c4c4" stroke-width="1"/>
<line x1="960.2" y1="325" x2="960.2" y2="352.5" stroke="#c4c4c4" stroke-width="1"/>
<line x1="1104.5" y1="325" x2="1104.5" y2="352.5" stroke="#c4c4c4" stroke-width="1"/>
<line x1="1268" y1="325" x2="1268" y2="352.5" stroke="#c4c4c4" stroke-width="1"/>
<line x1="1403.2" y1="325" x2="1403.2" y2="352.5" stroke="#c4c4c4" stroke-width="1"/>
<line x1="1582.5" y1="325" x2="1582.5" y2="352.5" stroke="#c4c4c4" stroke-width="1"/>
<line x1="1773.2" y1="325" x2="1773.2" y2="352.5" stroke="#c4c4c4" stroke-width="1"/>
<rect x="39.5" y="352.5" width="1849.5" height="29" fill="#5ea69e"/>
<rect x="39.5" y="381.5" width="1849.5" height="29" fill="#deebe9"/>
<rect x="39.5" y="410.5" width="1849.5" height="29" fill="#fff"/>
<line x1="131" y1="411.5" x2="131" y2="439.5" stroke="#e2e2e2" stroke-width="1"/>
<line x1="316.2" y1="411.5" x2="316.2" y2="439.5" stroke="#e2e2e2" stroke-width="1"/>
<line x1="526.2" y1="411.5" x2="526.2" y2="439.5" stroke="#e2e2e2" stroke-width="1"/>
<line x1="775.2" y1="411.5" x2="775.2" y2="439.5" stroke="#e2e2e2" stroke-width="1"/>
<line x1="960.2" y1="411.5" x2="960.2" y2="439.5" stroke="#e2e2e2" stroke-width="1"/>
<line x1="1104.5" y1="411.5" x2="1104.5" y2="439.5" stroke="#e2e2e2" stroke-width="1"/>
<line x1="1268" y1="411.5" x2="1268" y2="439.5" stroke="#e2e2e2" stroke-width="1"/>
<line x1="1403.2" y1="411.5" x2="1403.2" y2="439.5" stroke="#e2e2e2" stroke-width="1"/>
<line x1="1582.5" y1="411.5" x2="1582.5" y2="439.5" stroke="#e2e2e2" stroke-width="1"/>
<line x1="1773.2" y1="411.5" x2="1773.2" y2="439.5" stroke="#e2e2e2" stroke-width="1"/>
<rect x="39.5" y="439.5" width="1849.5" height="29" fill="#deebe9"/>
<rect x="39.5" y="468.5" width="1849.5" height="29" fill="#fff"/>
<line x1="131" y1="469.5" x2="131" y2="497.5" stroke="#e2e2e2" stroke-width="1"/>
<line x1="316.2" y1="469.5" x2="316.2" y2="497.5" stroke="#e2e2e2" stroke-width="1"/>
<line x1="526.2" y1="469.5" x2="526.2" y2="497.5" stroke="#e2e2e2" stroke-width="1"/>
<line x1="775.2" y1="469.5" x2="775.2" y2="497.5" stroke="#e2e2e2" stroke-width="1"/>
<line x1="960.2" y1="469.5" x2="960.2" y2="497.5" stroke="#e2e2e2" stroke-width="1"/>
<line x1="1104.5" y1="469.5" x2="1104.5" y2="497.5" stroke="#e2e2e2" stroke-width="1"/>
<line x1="1268" y1="469.5" x2="1268" y2="497.5" stroke="#e2e2e2" stroke-width="1"/>
<line x1="1403.2" y1="469.5" x2="1403.2" y2="497.5" stroke="#e2e2e2" stroke-width="1"/>
<line x1="1582.5" y1="469.5" x2="1582.5" y2="497.5" stroke="#e2e2e2" stroke-width="1"/>
<line x1="1773.2" y1="469.5" x2="1773.2" y2="497.5" stroke="#e2e2e2" stroke-width="1"/>
<rect x="39.5" y="497.5" width="1849.5" height="29" fill="#deebe9"/>
<rect x="39.5" y="526.5" width="1849.5" height="29" fill="#fff"/>
<line x1="131" y1="527.5" x2="131" y2="555.5" stroke="#e2e2e2" stroke-width="1"/>
<line x1="316.2" y1="527.5" x2="316.2" y2="555.5" stroke="#e2e2e2" stroke-width="1"/>
<line x1="526.2" y1="527.5" x2="526.2" y2="555.5" stroke="#e2e2e2" stroke-width="1"/>
<line x1="775.2" y1="527.5" x2="775.2" y2="555.5" stroke="#e2e2e2" stroke-width="1"/>
<line x1="960.2" y1="527.5" x2="960.2" y2="555.5" stroke="#e2e2e2" stroke-width="1"/>
<line x1="1104.5" y1="527.5" x2="1104.5" y2="555.5" stroke="#e2e2e2" stroke-width="1"/>
<line x1="1268" y1="527.5" x2="1268" y2="555.5" stroke="#e2e2e2" stroke-width="1"/>
<line x1="1403.2" y1="527.5" x2="1403.2" y2="555.5" stroke="#e2e2e2" stroke-width="1"/>
<line x1="1582.5" y1="527.5" x2="1582.5" y2="555.5" stroke="#e2e2e2" stroke-width="1"/>
<line x1="1773.2" y1="527.5" x2="1773.2" y2="555.5" stroke="#e2e2e2" stroke-width="1"/>
<rect x="39.5" y="555.5" width="1849.5" height="29" fill="#deebe9"/>
<rect x="39.5" y="584.5" width="1849.5" height="29" fill="#fff"/>
<line x1="131" y1="585.5" x2="131" y2="613.5" stroke="#e2e2e2" stroke-width="1"/>
<line x1="316.2" y1="585.5" x2="316.2" y2="613.5" stroke="#e2e2e2" stroke-width="1"/>
<line x1="526.2" y1="585.5" x2="526.2" y2="613.5" stroke="#e2e2e2" stroke-width="1"/>
<line x1="775.2" y1="585.5" x2="775.2" y2="613.5" stroke="#e2e2e2" stroke-width="1"/>
<line x1="960.2" y1="585.5" x2="960.2" y2="613.5" stroke="#e2e2e2" stroke-width="1"/>
<line x1="1104.5" y1="585.5" x2="1104.5" y2="613.5" stroke="#e2e2e2" stroke-width="1"/>
<line x1="1268" y1="585.5" x2="1268" y2="613.5" stroke="#e2e2e2" stroke-width="1"/>
<line x1="1403.2" y1="585.5" x2="1403.2" y2="613.5" stroke="#e2e2e2" stroke-width="1"/>
<line x1="1582.5" y1="585.5" x2="1582.5" y2="613.5" stroke="#e2e2e2" stroke-width="1"/>
<line x1="1773.2" y1="585.5" x2="1773.2" y2="613.5" stroke="#e2e2e2" stroke-width="1"/>
<rect x="39.5" y="613.5" width="1849.5" height="29" fill="#deebe9"/>
<rect x="39.5" y="642.5" width="1849.5" height="29" fill="#fff"/>
<line x1="131" y1="643.5" x2="131" y2="671.5" stroke="#e2e2e2" stroke-width="1"/>
<line x1="316.2" y1="643.5" x2="316.2" y2="671.5" stroke="#e2e2e2" stroke-width="1"/>
<line x1="526.2" y1="643.5" x2="526.2" y2="671.5" stroke="#e2e2e2" stroke-width="1"/>
<line x1="775.2" y1="643.5" x2="775.2" y2="671.5" stroke="#e2e2e2" stroke-width="1"/>
<line x1="960.2" y1="643.5" x2="960.2" y2="671.5" stroke="#e2e2e2" stroke-width="1"/>
<line x1="1104.5" y1="643.5" x2="1104.5" y2="671.5" stroke="#e2e2e2" stroke-width="1"/>
<line x1="1268" y1="643.5" x2="1268" y2="671.5" stroke="#e2e2e2" stroke-width="1"/>
<line x1="1403.2" y1="643.5" x2="1403.2" y2="671.5" stroke="#e2e2e2" stroke-width="1"/>
<line x1="1582.5" y1="643.5" x2="1582.5" y2="671.5" stroke="#e2e2e2" stroke-width="1"/>
<line x1="1773.2" y1="643.5" x2="1773.2" y2="671.5" stroke="#e2e2e2" stroke-width="1"/>
<rect x="39.5" y="671.5" width="1849.5" height="29" fill="#deebe9"/>
<rect x="39.5" y="700.5" width="1849.5" height="29" fill="#fff"/>
<line x1="131" y1="701.5" x2="131" y2="729.5" stroke="#e2e2e2" stroke-width="1"/>
<line x1="316.2" y1="701.5" x2="316.2" y2="729.5" stroke="#e2e2e2" stroke-width="1"/>
<line x1="526.2" y1="701.5" x2="526.2" y2="729.5" stroke="#e2e2e2" stroke-width="1"/>
<line x1="775.2" y1="701.5" x2="775.2" y2="729.5" stroke="#e2e2e2" stroke-width="1"/>
<line x1="960.2" y1="701.5" x2="960.2" y2="729.5" stroke="#e2e2e2" stroke-width="1"/>
<line x1="1104.5" y1="701.5" x2="1104.5" y2="729.5" stroke="#e2e2e2" stroke-width="1"/>
<line x1="1268" y1="701.5" x2="1268" y2="729.5" stroke="#e2e2e2" stroke-width="1"/>
<line x1="1403.2" y1="701.5" x2="1403.2" y2="729.5" stroke="#e2e2e2" stroke-width="1"/>
<line x1="1582.5" y1="701.5" x2="1582.5" y2="729.5" stroke="#e2e2e2" stroke-width="1"/>
<line x1="1773.2" y1="701.5" x2="1773.2" y2="729.5" stroke="#e2e2e2" stroke-width="1"/>
<rect x="39.5" y="729.5" width="1849.5" height="29" fill="#deebe9"/>
<rect x="39.5" y="758.5" width="1849.5" height="29" fill="#fff"/>
<line x1="131" y1="759.5" x2="131" y2="787.5" stroke="#e2e2e2" stroke-width="1"/>
<line x1="316.2" y1="759.5" x2="316.2" y2="787.5" stroke="#e2e2e2" stroke-width="1"/>
<line x1="526.2" y1="759.5" x2="526.2" y2="787.5" stroke="#e2e2e2" stroke-width="1"/>
<line x1="775.2" y1="759.5" x2="775.2" y2="787.5" stroke="#e2e2e2" stroke-width="1"/>
<line x1="960.2" y1="759.5" x2="960.2" y2="787.5" stroke="#e2e2e2" stroke-width="1"/>
<line x1="1104.5" y1="759.5" x2="1104.5" y2="787.5" stroke="#e2e2e2" stroke-width="1"/>
<line x1="1268" y1="759.5" x2="1268" y2="787.5" stroke="#e2e2e2" stroke-width="1"/>
<line x1="1403.2" y1="759.5" x2="1403.2" y2="787.5" stroke="#e2e2e2" stroke-width="1"/>
<line x1="1582.5" y1="759.5" x2="1582.5" y2="787.5" stroke="#e2e2e2" stroke-width="1"/>
<line x1="1773.2" y1="759.5" x2="1773.2" y2="787.5" stroke="#e2e2e2" stroke-width="1"/>
<rect x="39.5" y="787.5" width="1849.5" height="29" fill="#deebe9"/>
<rect x="39.5" y="816.5" width="1849.5" height="29" fill="#fff"/>
<line x1="131" y1="817.5" x2="131" y2="845.5" stroke="#e2e2e2" stroke-width="1"/>
<line x1="316.2" y1="817.5" x2="316.2" y2="845.5" stroke="#e2e2e2" stroke-width="1"/>
<line x1="526.2" y1="817.5" x2="526.2" y2="845.5" stroke="#e2e2e2" stroke-width="1"/>
<line x1="775.2" y1="817.5" x2="775.2" y2="845.5" stroke="#e2e2e2" stroke-width="1"/>
<line x1="960.2" y1="817.5" x2="960.2" y2="845.5" stroke="#e2e2e2" stroke-width="1"/>
<line x1="1104.5" y1="817.5" x2="1104.5" y2="845.5" stroke="#e2e2e2" stroke-width="1"/>
<line x1="1268" y1="817.5" x2="1268" y2="845.5" stroke="#e2e2e2" stroke-width="1"/>
<line x1="1403.2" y1="817.5" x2="1403.2" y2="845.5" stroke="#e2e2e2" stroke-width="1"/>
<line x1="1582.5" y1="817.5" x2="1582.5" y2="845.5" stroke="#e2e2e2" stroke-width="1"/>
<line x1="1773.2" y1="817.5" x2="1773.2" y2="845.5" stroke="#e2e2e2" stroke-width="1"/>
<rect x="39.5" y="845.5" width="1849.5" height="29" fill="#deebe9"/>
<rect x="39.5" y="874.5" width="1849.5" height="29" fill="#fff"/>
<line x1="131" y1="875.5" x2="131" y2="903.5" stroke="#e2e2e2" stroke-width="1"/>
<line x1="316.2" y1="875.5" x2="316.2" y2="903.5" stroke="#e2e2e2" stroke-width="1"/>
<line x1="526.2" y1="875.5" x2="526.2" y2="903.5" stroke="#e2e2e2" stroke-width="1"/>
<line x1="775.2" y1="875.5" x2="775.2" y2="903.5" stroke="#e2e2e2" stroke-width="1"/>
<line x1="960.2" y1="875.5" x2="960.2" y2="903.5" stroke="#e2e2e2" stroke-width="1"/>
<line x1="1104.5" y1="875.5" x2="1104.5" y2="903.5" stroke="#e2e2e2" stroke-width="1"/>
<line x1="1268" y1="875.5" x2="1268" y2="903.5" stroke="#e2e2e2" stroke-width="1"/>
<line x1="1403.2" y1="875.5" x2="1403.2" y2="903.5" stroke="#e2e2e2" stroke-width="1"/>
<line x1="1582.5" y1="875.5" x2="1582.5" y2="903.5" stroke="#e2e2e2" stroke-width="1"/>
<line x1="1773.2" y1="875.5" x2="1773.2" y2="903.5" stroke="#e2e2e2" stroke-width="1"/>
<rect x="39.5" y="903.5" width="1849.5" height="23.5" fill="#deebe9"/>
<line x1="39.5" y1="381.5" x2="1889" y2="381.5" stroke="#b0d3ce" stroke-width="1.2"/>
<line x1="0" y1="381.5" x2="39" y2="381.5" stroke="#cfcfcf" stroke-width="1"/>
<line x1="39.5" y1="410.5" x2="1889" y2="410.5" stroke="#b0d3ce" stroke-width="1.2"/>
<line x1="0" y1="410.5" x2="39" y2="410.5" stroke="#cfcfcf" stroke-width="1"/>
<line x1="39.5" y1="439.5" x2="1889" y2="439.5" stroke="#b0d3ce" stroke-width="1.2"/>
<line x1="0" y1="439.5" x2="39" y2="439.5" stroke="#cfcfcf" stroke-width="1"/>
<line x1="39.5" y1="468.5" x2="1889" y2="468.5" stroke="#b0d3ce" stroke-width="1.2"/>
<line x1="0" y1="468.5" x2="39" y2="468.5" stroke="#cfcfcf" stroke-width="1"/>
<line x1="39.5" y1="497.5" x2="1889" y2="497.5" stroke="#b0d3ce" stroke-width="1.2"/>
<line x1="0" y1="497.5" x2="39" y2="497.5" stroke="#cfcfcf" stroke-width="1"/>
<line x1="39.5" y1="526.5" x2="1889" y2="526.5" stroke="#b0d3ce" stroke-width="1.2"/>
<line x1="0" y1="526.5" x2="39" y2="526.5" stroke="#cfcfcf" stroke-width="1"/>
<line x1="39.5" y1="555.5" x2="1889" y2="555.5" stroke="#b0d3ce" stroke-width="1.2"/>
<line x1="0" y1="555.5" x2="39" y2="555.5" stroke="#cfcfcf" stroke-width="1"/>
<line x1="39.5" y1="584.5" x2="1889" y2="584.5" stroke="#b0d3ce" stroke-width="1.2"/>
<line x1="0" y1="584.5" x2="39" y2="584.5" stroke="#cfcfcf" stroke-width="1"/>
<line x1="39.5" y1="613.5" x2="1889" y2="613.5" stroke="#b0d3ce" stroke-width="1.2"/>
<line x1="0" y1="613.5" x2="39" y2="613.5" stroke="#cfcfcf" stroke-width="1"/>
<line x1="39.5" y1="642.5" x2="1889" y2="642.5" stroke="#b0d3ce" stroke-width="1.2"/>
<line x1="0" y1="642.5" x2="39" y2="642.5" stroke="#cfcfcf" stroke-width="1"/>
<line x1="39.5" y1="671.5" x2="1889" y2="671.5" stroke="#b0d3ce" stroke-width="1.2"/>
<line x1="0" y1="671.5" x2="39" y2="671.5" stroke="#cfcfcf" stroke-width="1"/>
<line x1="39.5" y1="700.5" x2="1889" y2="700.5" stroke="#b0d3ce" stroke-width="1.2"/>
<line x1="0" y1="700.5" x2="39" y2="700.5" stroke="#cfcfcf" stroke-width="1"/>
<line x1="39.5" y1="729.5" x2="1889" y2="729.5" stroke="#b0d3ce" stroke-width="1.2"/>
<line x1="0" y1="729.5" x2="39" y2="729.5" stroke="#cfcfcf" stroke-width="1"/>
<line x1="39.5" y1="758.5" x2="1889" y2="758.5" stroke="#b0d3ce" stroke-width="1.2"/>
<line x1="0" y1="758.5" x2="39" y2="758.5" stroke="#cfcfcf" stroke-width="1"/>
<line x1="39.5" y1="787.5" x2="1889" y2="787.5" stroke="#b0d3ce" stroke-width="1.2"/>
<line x1="0" y1="787.5" x2="39" y2="787.5" stroke="#cfcfcf" stroke-width="1"/>
<line x1="39.5" y1="816.5" x2="1889" y2="816.5" stroke="#b0d3ce" stroke-width="1.2"/>
<line x1="0" y1="816.5" x2="39" y2="816.5" stroke="#cfcfcf" stroke-width="1"/>
<line x1="39.5" y1="845.5" x2="1889" y2="845.5" stroke="#b0d3ce" stroke-width="1.2"/>
<line x1="0" y1="845.5" x2="39" y2="845.5" stroke="#cfcfcf" stroke-width="1"/>
<line x1="39.5" y1="874.5" x2="1889" y2="874.5" stroke="#b0d3ce" stroke-width="1.2"/>
<line x1="0" y1="874.5" x2="39" y2="874.5" stroke="#cfcfcf" stroke-width="1"/>
<line x1="39.5" y1="903.5" x2="1889" y2="903.5" stroke="#b0d3ce" stroke-width="1.2"/>
<line x1="0" y1="903.5" x2="39" y2="903.5" stroke="#cfcfcf" stroke-width="1"/>
<rect x="0" y="352.5" width="39" height="29" fill="#d2d2d2"/>
<line x1="39.3" y1="352.5" x2="39.3" y2="927" stroke="#a6a6a6" stroke-width="1"/>
<rect x="38.2" y="352.5" width="1.8" height="29" fill="#1e7145"/>
<text x="14.63" y="374.5" font-size="18.9" textLength="9.46" lengthAdjust="spacingAndGlyphs" fill="#1e6b41">1</text>
<text x="14.87" y="403.5" font-size="18.9" textLength="9.46" lengthAdjust="spacingAndGlyphs" fill="#222">2</text>
<text x="14.91" y="432.5" font-size="18.9" textLength="9.46" lengthAdjust="spacingAndGlyphs" fill="#222">3</text>
<text x="14.93" y="461.5" font-size="18.9" textLength="9.46" lengthAdjust="spacingAndGlyphs" fill="#222">4</text>
<text x="14.88" y="490.5" font-size="18.9" textLength="9.46" lengthAdjust="spacingAndGlyphs" fill="#222">5</text>
<text x="14.81" y="519.5" font-size="18.9" textLength="9.46" lengthAdjust="spacingAndGlyphs" fill="#222">6</text>
<text x="14.86" y="548.5" font-size="18.9" textLength="9.46" lengthAdjust="spacingAndGlyphs" fill="#222">7</text>
<text x="14.87" y="577.5" font-size="18.9" textLength="9.46" lengthAdjust="spacingAndGlyphs" fill="#222">8</text>
<text x="14.88" y="606.5" font-size="18.9" textLength="9.46" lengthAdjust="spacingAndGlyphs" fill="#222">9</text>
<text x="9.64" y="635.5" font-size="18.9" textLength="20.81" lengthAdjust="spacingAndGlyphs" fill="#222">10</text>
<text x="10.43" y="664.5" font-size="18.9" textLength="19.42" lengthAdjust="spacingAndGlyphs" fill="#222">11</text>
<text x="9.76" y="693.5" font-size="18.9" textLength="20.81" lengthAdjust="spacingAndGlyphs" fill="#222">12</text>
<text x="9.69" y="722.5" font-size="18.9" textLength="20.81" lengthAdjust="spacingAndGlyphs" fill="#222">13</text>
<text x="9.56" y="751.5" font-size="18.9" textLength="20.81" lengthAdjust="spacingAndGlyphs" fill="#222">14</text>
<text x="9.67" y="780.5" font-size="18.9" textLength="20.81" lengthAdjust="spacingAndGlyphs" fill="#222">15</text>
<text x="9.69" y="809.5" font-size="18.9" textLength="20.81" lengthAdjust="spacingAndGlyphs" fill="#222">16</text>
<text x="9.76" y="838.5" font-size="18.9" textLength="20.81" lengthAdjust="spacingAndGlyphs" fill="#222">17</text>
<text x="9.69" y="867.5" font-size="18.9" textLength="20.81" lengthAdjust="spacingAndGlyphs" fill="#222">18</text>
<text x="9.73" y="896.5" font-size="18.9" textLength="20.81" lengthAdjust="spacingAndGlyphs" fill="#222">19</text>
<text x="9.89" y="925.5" font-size="18.9" textLength="20.81" lengthAdjust="spacingAndGlyphs" fill="#222">20</text>
<text x="43.22" y="374.3" font-size="19.19" textLength="58.05" lengthAdjust="spacingAndGlyphs" class="b" fill="#fff">Status</text>
<text x="134.96" y="374.3" font-size="19.19" textLength="151.32" lengthAdjust="spacingAndGlyphs" class="b" fill="#fff">OnlineOrderFlag</text>
<text x="319.96" y="374.3" font-size="19.19" textLength="175.3" lengthAdjust="spacingAndGlyphs" class="b" fill="#fff">SalesOrderNumber</text>
<text x="529.47" y="374.3" font-size="19.19" textLength="213.3" lengthAdjust="spacingAndGlyphs" class="b" fill="#fff">PurchaseOrderNumber</text>
<text x="779.04" y="374.3" font-size="19.19" textLength="149.99" lengthAdjust="spacingAndGlyphs" class="b" fill="#fff">AccountNumber</text>
<text x="963.45" y="374.3" font-size="19.19" textLength="111.12" lengthAdjust="spacingAndGlyphs" class="b" fill="#fff">CustomerID</text>
<text x="1107.48" y="374.3" font-size="19.19" textLength="131.3" lengthAdjust="spacingAndGlyphs" class="b" fill="#fff">SalesPersonID</text>
<text x="1272.28" y="374.3" font-size="19.19" textLength="101.04" lengthAdjust="spacingAndGlyphs" class="b" fill="#fff">TerritoryID</text>
<text x="1406.26" y="374.3" font-size="19.19" textLength="145.23" lengthAdjust="spacingAndGlyphs" class="b" fill="#fff">BillToAddressID</text>
<text x="1585.72" y="374.3" font-size="19.19" textLength="157.52" lengthAdjust="spacingAndGlyphs" class="b" fill="#fff">ShipToAddressID</text>
<clipPath id="gc"><rect x="39.5" y="352" width="1849.5" height="575"/></clipPath>
<text x="1776.45" y="374.3" font-size="19.19" textLength="131.73" lengthAdjust="spacingAndGlyphs" class="b" fill="#fff" clip-path="url(#gc)">ShipMethodID</text>
<defs><linearGradient id="fb" x1="0" y1="0" x2="0" y2="1"><stop offset="0" stop-color="#ffffff"/><stop offset="1" stop-color="#e9e9e9"/></linearGradient></defs>
<rect x="107" y="356" width="23" height="23.2" fill="url(#fb)" stroke="#c9d9d7" stroke-width="0.8"/>
<path d="M114 365 H123 L118.5 370 Z" fill="#5c5c5c"/>
<rect x="292.2" y="356" width="23" height="23.2" fill="url(#fb)" stroke="#c9d9d7" stroke-width="0.8"/>
<path d="M299.2 365 H308.2 L303.7 370 Z" fill="#5c5c5c"/>
<rect x="502.2" y="356" width="23" height="23.2" fill="url(#fb)" stroke="#c9d9d7" stroke-width="0.8"/>
<path d="M509.2 365 H518.2 L513.7 370 Z" fill="#5c5c5c"/>
<rect x="751.2" y="356" width="23" height="23.2" fill="url(#fb)" stroke="#c9d9d7" stroke-width="0.8"/>
<path d="M758.2 365 H767.2 L762.7 370 Z" fill="#5c5c5c"/>
<rect x="936.2" y="356" width="23" height="23.2" fill="url(#fb)" stroke="#c9d9d7" stroke-width="0.8"/>
<path d="M943.2 365 H952.2 L947.7 370 Z" fill="#5c5c5c"/>
<rect x="1080.5" y="356" width="23" height="23.2" fill="url(#fb)" stroke="#c9d9d7" stroke-width="0.8"/>
<path d="M1087.5 365 H1096.5 L1092 370 Z" fill="#5c5c5c"/>
<rect x="1244" y="356" width="23" height="23.2" fill="url(#fb)" stroke="#c9d9d7" stroke-width="0.8"/>
<path d="M1251 365 H1260 L1255.5 370 Z" fill="#5c5c5c"/>
<rect x="1379.2" y="356" width="23" height="23.2" fill="url(#fb)" stroke="#c9d9d7" stroke-width="0.8"/>
<path d="M1386.2 365 H1395.2 L1390.7 370 Z" fill="#5c5c5c"/>
<rect x="1558.5" y="356" width="23" height="23.2" fill="url(#fb)" stroke="#c9d9d7" stroke-width="0.8"/>
<path d="M1565.5 365 H1574.5 L1570 370 Z" fill="#5c5c5c"/>
<rect x="1749.2" y="356" width="23" height="23.2" fill="url(#fb)" stroke="#c9d9d7" stroke-width="0.8"/>
<path d="M1756.2 365 H1765.2 L1760.7 370 Z" fill="#5c5c5c"/>
<g clip-path="url(#gc)" fill="#000">
<text x="118.05" y="403.8" font-size="19.6" textLength="10.31" lengthAdjust="spacingAndGlyphs" fill="#000">5</text>
<text x="198.56" y="403.8" font-size="19.6" textLength="51.02" lengthAdjust="spacingAndGlyphs" fill="#000">FALSE</text>
<text x="320.64" y="403.8" font-size="19.6" textLength="80.33" lengthAdjust="spacingAndGlyphs" fill="#000">SO43659</text>
<text x="530" y="403.8" font-size="19.6" textLength="125.75" lengthAdjust="spacingAndGlyphs" fill="#000">PO522145787</text>
<text x="779.19" y="403.8" font-size="19.6" textLength="146.03" lengthAdjust="spacingAndGlyphs" fill="#000">10-4020-000676</text>
<text x="1046.1" y="403.8" font-size="19.6" textLength="54.91" lengthAdjust="spacingAndGlyphs" fill="#000">29825</text>
<text x="1231.77" y="403.8" font-size="19.6" textLength="33.49" lengthAdjust="spacingAndGlyphs" fill="#000">279</text>
<text x="1389.95" y="403.8" font-size="19.6" textLength="10.31" lengthAdjust="spacingAndGlyphs" fill="#000">5</text>
<text x="1546.84" y="403.8" font-size="19.6" textLength="32.26" lengthAdjust="spacingAndGlyphs" fill="#000">985</text>
<text x="1737.84" y="403.8" font-size="19.6" textLength="32.26" lengthAdjust="spacingAndGlyphs" fill="#000">985</text>
<text x="118.05" y="432.8" font-size="19.6" textLength="10.31" lengthAdjust="spacingAndGlyphs" fill="#000">5</text>
<text x="198.56" y="432.8" font-size="19.6" textLength="51.02" lengthAdjust="spacingAndGlyphs" fill="#000">FALSE</text>
<text x="320.64" y="432.8" font-size="19.6" textLength="80.34" lengthAdjust="spacingAndGlyphs" fill="#000">SO43660</text>
<text x="530" y="432.8" font-size="19.6" textLength="147.81" lengthAdjust="spacingAndGlyphs" fill="#000">PO18850127500</text>
<text x="779.17" y="432.8" font-size="19.6" textLength="146.24" lengthAdjust="spacingAndGlyphs" fill="#000">10-4020-000117</text>
<text x="1045.71" y="432.8" font-size="19.6" textLength="55.48" lengthAdjust="spacingAndGlyphs" fill="#000">29672</text>
<text x="1231.77" y="432.8" font-size="19.6" textLength="33.49" lengthAdjust="spacingAndGlyphs" fill="#000">279</text>
<text x="1389.95" y="432.8" font-size="19.6" textLength="10.31" lengthAdjust="spacingAndGlyphs" fill="#000">5</text>
<text x="1546.52" y="432.8" font-size="19.6" textLength="32.73" lengthAdjust="spacingAndGlyphs" fill="#000">921</text>
<text x="1737.52" y="432.8" font-size="19.6" textLength="32.73" lengthAdjust="spacingAndGlyphs" fill="#000">921</text>
<text x="118.05" y="461.8" font-size="19.6" textLength="10.31" lengthAdjust="spacingAndGlyphs" fill="#000">5</text>
<text x="198.56" y="461.8" font-size="19.6" textLength="51.02" lengthAdjust="spacingAndGlyphs" fill="#000">FALSE</text>
<text x="320.65" y="461.8" font-size="19.6" textLength="80.11" lengthAdjust="spacingAndGlyphs" fill="#000">SO43661</text>
<text x="530" y="461.8" font-size="19.6" textLength="147.81" lengthAdjust="spacingAndGlyphs" fill="#000">PO18473189620</text>
<text x="779.19" y="461.8" font-size="19.6" textLength="145.99" lengthAdjust="spacingAndGlyphs" fill="#000">10-4020-000442</text>
<text x="1045.14" y="461.8" font-size="19.6" textLength="55.63" lengthAdjust="spacingAndGlyphs" fill="#000">29734</text>
<text x="1231.95" y="461.8" font-size="19.6" textLength="33.36" lengthAdjust="spacingAndGlyphs" fill="#000">282</text>
<text x="1389.11" y="461.8" font-size="19.6" textLength="11.26" lengthAdjust="spacingAndGlyphs" fill="#000">6</text>
<text x="1545.95" y="461.8" font-size="19.6" textLength="33.36" lengthAdjust="spacingAndGlyphs" fill="#000">517</text>
<text x="1736.95" y="461.8" font-size="19.6" textLength="33.36" lengthAdjust="spacingAndGlyphs" fill="#000">517</text>
<text x="118.05" y="490.8" font-size="19.6" textLength="10.31" lengthAdjust="spacingAndGlyphs" fill="#000">5</text>
<text x="198.56" y="490.8" font-size="19.6" textLength="51.02" lengthAdjust="spacingAndGlyphs" fill="#000">FALSE</text>
<text x="320.65" y="490.8" font-size="19.6" textLength="80.21" lengthAdjust="spacingAndGlyphs" fill="#000">SO43662</text>
<text x="530" y="490.8" font-size="19.6" textLength="147.85" lengthAdjust="spacingAndGlyphs" fill="#000">PO18444174044</text>
<text x="779.19" y="490.8" font-size="19.6" textLength="146.22" lengthAdjust="spacingAndGlyphs" fill="#000">10-4020-000227</text>
<text x="1045.14" y="490.8" font-size="19.6" textLength="55.63" lengthAdjust="spacingAndGlyphs" fill="#000">29994</text>
<text x="1231.95" y="490.8" font-size="19.6" textLength="33.36" lengthAdjust="spacingAndGlyphs" fill="#000">282</text>
<text x="1389.11" y="490.8" font-size="19.6" textLength="11.26" lengthAdjust="spacingAndGlyphs" fill="#000">6</text>
<text x="1545.91" y="490.8" font-size="19.6" textLength="33.4" lengthAdjust="spacingAndGlyphs" fill="#000">482</text>
<text x="1736.91" y="490.8" font-size="19.6" textLength="33.4" lengthAdjust="spacingAndGlyphs" fill="#000">482</text>
<text x="118.05" y="519.8" font-size="19.6" textLength="10.31" lengthAdjust="spacingAndGlyphs" fill="#000">5</text>
<text x="198.56" y="519.8" font-size="19.6" textLength="51.02" lengthAdjust="spacingAndGlyphs" fill="#000">FALSE</text>
<text x="320.65" y="519.8" font-size="19.6" textLength="80.17" lengthAdjust="spacingAndGlyphs" fill="#000">SO43663</text>
<text x="530" y="519.8" font-size="19.6" textLength="147.81" lengthAdjust="spacingAndGlyphs" fill="#000">PO18009186470</text>
<text x="779.19" y="519.8" font-size="19.6" textLength="146.11" lengthAdjust="spacingAndGlyphs" fill="#000">10-4020-000510</text>
<text x="1046.1" y="519.8" font-size="19.6" textLength="54.91" lengthAdjust="spacingAndGlyphs" fill="#000">29565</text>
<text x="1231.77" y="519.8" font-size="19.6" textLength="33.4" lengthAdjust="spacingAndGlyphs" fill="#000">276</text>
<text x="1388.69" y="519.8" font-size="19.6" textLength="11.41" lengthAdjust="spacingAndGlyphs" fill="#000">4</text>
<text x="1535.2" y="519.8" font-size="19.6" textLength="43.97" lengthAdjust="spacingAndGlyphs" fill="#000">1073</text>
<text x="1726.2" y="519.8" font-size="19.6" textLength="43.97" lengthAdjust="spacingAndGlyphs" fill="#000">1073</text>
<text x="118.05" y="548.8" font-size="19.6" textLength="10.31" lengthAdjust="spacingAndGlyphs" fill="#000">5</text>
<text x="198.56" y="548.8" font-size="19.6" textLength="51.02" lengthAdjust="spacingAndGlyphs" fill="#000">FALSE</text>
<text x="320.64" y="548.8" font-size="19.6" textLength="80.39" lengthAdjust="spacingAndGlyphs" fill="#000">SO43664</text>
<text x="530" y="548.8" font-size="19.6" textLength="147.64" lengthAdjust="spacingAndGlyphs" fill="#000">PO16617121983</text>
<text x="779.19" y="548.8" font-size="19.6" textLength="146.22" lengthAdjust="spacingAndGlyphs" fill="#000">10-4020-000397</text>
<text x="1045.67" y="548.8" font-size="19.6" textLength="55.38" lengthAdjust="spacingAndGlyphs" fill="#000">29898</text>
<text x="1231.59" y="548.8" font-size="19.6" textLength="33.48" lengthAdjust="spacingAndGlyphs" fill="#000">280</text>
<text x="1389.84" y="548.8" font-size="19.6" textLength="10.58" lengthAdjust="spacingAndGlyphs" fill="#000">1</text>
<text x="1545.82" y="548.8" font-size="19.6" textLength="33.35" lengthAdjust="spacingAndGlyphs" fill="#000">876</text>
<text x="1736.82" y="548.8" font-size="19.6" textLength="33.35" lengthAdjust="spacingAndGlyphs" fill="#000">876</text>
<text x="118.05" y="577.8" font-size="19.6" textLength="10.31" lengthAdjust="spacingAndGlyphs" fill="#000">5</text>
<text x="198.56" y="577.8" font-size="19.6" textLength="51.02" lengthAdjust="spacingAndGlyphs" fill="#000">FALSE</text>
<text x="320.65" y="577.8" font-size="19.6" textLength="79.66" lengthAdjust="spacingAndGlyphs" fill="#000">SO43665</text>
<text x="530" y="577.8" font-size="19.6" textLength="147.69" lengthAdjust="spacingAndGlyphs" fill="#000">PO16588191572</text>
<text x="779.19" y="577.8" font-size="19.6" textLength="146.03" lengthAdjust="spacingAndGlyphs" fill="#000">10-4020-000146</text>
<text x="1045.36" y="577.8" font-size="19.6" textLength="55.59" lengthAdjust="spacingAndGlyphs" fill="#000">29580</text>
<text x="1231.86" y="577.8" font-size="19.6" textLength="33.31" lengthAdjust="spacingAndGlyphs" fill="#000">283</text>
<text x="1389.84" y="577.8" font-size="19.6" textLength="10.58" lengthAdjust="spacingAndGlyphs" fill="#000">1</text>
<text x="1545.82" y="577.8" font-size="19.6" textLength="33.43" lengthAdjust="spacingAndGlyphs" fill="#000">849</text>
<text x="1736.82" y="577.8" font-size="19.6" textLength="33.43" lengthAdjust="spacingAndGlyphs" fill="#000">849</text>
<text x="118.05" y="606.8" font-size="19.6" textLength="10.31" lengthAdjust="spacingAndGlyphs" fill="#000">5</text>
<text x="198.56" y="606.8" font-size="19.6" textLength="51.02" lengthAdjust="spacingAndGlyphs" fill="#000">FALSE</text>
<text x="320.65" y="606.8" font-size="19.6" textLength="80.26" lengthAdjust="spacingAndGlyphs" fill="#000">SO43666</text>
<text x="530" y="606.8" font-size="19.6" textLength="147.64" lengthAdjust="spacingAndGlyphs" fill="#000">PO16008173883</text>
<text x="779.17" y="606.8" font-size="19.6" textLength="145.91" lengthAdjust="spacingAndGlyphs" fill="#000">10-4020-000511</text>
<text x="1046" y="606.8" font-size="19.6" textLength="55.19" lengthAdjust="spacingAndGlyphs" fill="#000">30052</text>
<text x="1231.77" y="606.8" font-size="19.6" textLength="33.4" lengthAdjust="spacingAndGlyphs" fill="#000">276</text>
<text x="1388.69" y="606.8" font-size="19.6" textLength="11.41" lengthAdjust="spacingAndGlyphs" fill="#000">4</text>
<text x="1534.71" y="606.8" font-size="19.6" textLength="44.18" lengthAdjust="spacingAndGlyphs" fill="#000">1074</text>
<text x="1725.71" y="606.8" font-size="19.6" textLength="44.18" lengthAdjust="spacingAndGlyphs" fill="#000">1074</text>
<text x="118.05" y="635.8" font-size="19.6" textLength="10.31" lengthAdjust="spacingAndGlyphs" fill="#000">5</text>
<text x="198.56" y="635.8" font-size="19.6" textLength="51.02" lengthAdjust="spacingAndGlyphs" fill="#000">FALSE</text>
<text x="320.64" y="635.8" font-size="19.6" textLength="80.44" lengthAdjust="spacingAndGlyphs" fill="#000">SO43667</text>
<text x="530" y="635.8" font-size="19.6" textLength="147.81" lengthAdjust="spacingAndGlyphs" fill="#000">PO15428132599</text>
<text x="779.19" y="635.8" font-size="19.6" textLength="146.03" lengthAdjust="spacingAndGlyphs" fill="#000">10-4020-000646</text>
<text x="1045.14" y="635.8" font-size="19.6" textLength="55.63" lengthAdjust="spacingAndGlyphs" fill="#000">29974</text>
<text x="1231.72" y="635.8" font-size="19.6" textLength="33.6" lengthAdjust="spacingAndGlyphs" fill="#000">277</text>
<text x="1389.52" y="635.8" font-size="19.6" textLength="10.82" lengthAdjust="spacingAndGlyphs" fill="#000">3</text>
<text x="1545.77" y="635.8" font-size="19.6" textLength="33.49" lengthAdjust="spacingAndGlyphs" fill="#000">629</text>
<text x="1736.77" y="635.8" font-size="19.6" textLength="33.49" lengthAdjust="spacingAndGlyphs" fill="#000">629</text>
<text x="118.05" y="664.8" font-size="19.6" textLength="10.31" lengthAdjust="spacingAndGlyphs" fill="#000">5</text>
<text x="198.56" y="664.8" font-size="19.6" textLength="51.02" lengthAdjust="spacingAndGlyphs" fill="#000">FALSE</text>
<text x="320.65" y="664.8" font-size="19.6" textLength="80.12" lengthAdjust="spacingAndGlyphs" fill="#000">SO43668</text>
<text x="530" y="664.8" font-size="19.6" textLength="147.14" lengthAdjust="spacingAndGlyphs" fill="#000">PO14732180295</text>
<text x="779.19" y="664.8" font-size="19.6" textLength="146.15" lengthAdjust="spacingAndGlyphs" fill="#000">10-4020-000514</text>
<text x="1045.14" y="664.8" font-size="19.6" textLength="55.63" lengthAdjust="spacingAndGlyphs" fill="#000">29614</text>
<text x="1231.95" y="664.8" font-size="19.6" textLength="33.36" lengthAdjust="spacingAndGlyphs" fill="#000">282</text>
<text x="1389.11" y="664.8" font-size="19.6" textLength="11.26" lengthAdjust="spacingAndGlyphs" fill="#000">6</text>
<text x="1546" y="664.8" font-size="19.6" textLength="33.25" lengthAdjust="spacingAndGlyphs" fill="#000">529</text>
<text x="1737" y="664.8" font-size="19.6" textLength="33.25" lengthAdjust="spacingAndGlyphs" fill="#000">529</text>
<text x="118.05" y="693.8" font-size="19.6" textLength="10.31" lengthAdjust="spacingAndGlyphs" fill="#000">5</text>
<text x="198.56" y="693.8" font-size="19.6" textLength="51.02" lengthAdjust="spacingAndGlyphs" fill="#000">FALSE</text>
<text x="320.64" y="693.8" font-size="19.6" textLength="80.33" lengthAdjust="spacingAndGlyphs" fill="#000">SO43669</text>
<text x="530" y="693.8" font-size="19.6" textLength="147.73" lengthAdjust="spacingAndGlyphs" fill="#000">PO14123169936</text>
<text x="779.19" y="693.8" font-size="19.6" textLength="145.9" lengthAdjust="spacingAndGlyphs" fill="#000">10-4020-000578</text>
<text x="1045.49" y="693.8" font-size="19.6" textLength="55.71" lengthAdjust="spacingAndGlyphs" fill="#000">29747</text>
<text x="1231.86" y="693.8" font-size="19.6" textLength="33.31" lengthAdjust="spacingAndGlyphs" fill="#000">283</text>
<text x="1389.84" y="693.8" font-size="19.6" textLength="10.58" lengthAdjust="spacingAndGlyphs" fill="#000">1</text>
<text x="1546.39" y="693.8" font-size="19.6" textLength="32.73" lengthAdjust="spacingAndGlyphs" fill="#000">895</text>
<text x="1737.39" y="693.8" font-size="19.6" textLength="32.73" lengthAdjust="spacingAndGlyphs" fill="#000">895</text>
<text x="118.05" y="722.8" font-size="19.6" textLength="10.31" lengthAdjust="spacingAndGlyphs" fill="#000">5</text>
<text x="198.56" y="722.8" font-size="19.6" textLength="51.02" lengthAdjust="spacingAndGlyphs" fill="#000">FALSE</text>
<text x="320.64" y="722.8" font-size="19.6" textLength="80.34" lengthAdjust="spacingAndGlyphs" fill="#000">SO43670</text>
<text x="529.98" y="722.8" font-size="19.6" textLength="147.83" lengthAdjust="spacingAndGlyphs" fill="#000">PO14384116310</text>
<text x="779.19" y="722.8" font-size="19.6" textLength="146.15" lengthAdjust="spacingAndGlyphs" fill="#000">10-4020-000504</text>
<text x="1045.54" y="722.8" font-size="19.6" textLength="55.52" lengthAdjust="spacingAndGlyphs" fill="#000">29566</text>
<text x="1232.33" y="722.8" font-size="19.6" textLength="32.78" lengthAdjust="spacingAndGlyphs" fill="#000">275</text>
<text x="1389.52" y="722.8" font-size="19.6" textLength="10.82" lengthAdjust="spacingAndGlyphs" fill="#000">3</text>
<text x="1545.65" y="722.8" font-size="19.6" textLength="33.42" lengthAdjust="spacingAndGlyphs" fill="#000">810</text>
<text x="1736.65" y="722.8" font-size="19.6" textLength="33.42" lengthAdjust="spacingAndGlyphs" fill="#000">810</text>
<text x="118.05" y="751.8" font-size="19.6" textLength="10.31" lengthAdjust="spacingAndGlyphs" fill="#000">5</text>
<text x="198.56" y="751.8" font-size="19.6" textLength="51.02" lengthAdjust="spacingAndGlyphs" fill="#000">FALSE</text>
<text x="320.65" y="751.8" font-size="19.6" textLength="80.11" lengthAdjust="spacingAndGlyphs" fill="#000">SO43671</text>
<text x="529.98" y="751.8" font-size="19.6" textLength="147.75" lengthAdjust="spacingAndGlyphs" fill="#000">PO13978119376</text>
<text x="779.19" y="751.8" font-size="19.6" textLength="146.11" lengthAdjust="spacingAndGlyphs" fill="#000">10-4020-000200</text>
<text x="1045.36" y="751.8" font-size="19.6" textLength="55.59" lengthAdjust="spacingAndGlyphs" fill="#000">29890</text>
<text x="1231.86" y="751.8" font-size="19.6" textLength="33.31" lengthAdjust="spacingAndGlyphs" fill="#000">283</text>
<text x="1389.84" y="751.8" font-size="19.6" textLength="10.58" lengthAdjust="spacingAndGlyphs" fill="#000">1</text>
<text x="1546.39" y="751.8" font-size="19.6" textLength="32.73" lengthAdjust="spacingAndGlyphs" fill="#000">855</text>
<text x="1737.39" y="751.8" font-size="19.6" textLength="32.73" lengthAdjust="spacingAndGlyphs" fill="#000">855</text>
<text x="118.05" y="780.8" font-size="19.6" textLength="10.31" lengthAdjust="spacingAndGlyphs" fill="#000">5</text>
<text x="198.56" y="780.8" font-size="19.6" textLength="51.02" lengthAdjust="spacingAndGlyphs" fill="#000">FALSE</text>
<text x="320.65" y="780.8" font-size="19.6" textLength="80.21" lengthAdjust="spacingAndGlyphs" fill="#000">SO43672</text>
<text x="530" y="780.8" font-size="19.6" textLength="147.92" lengthAdjust="spacingAndGlyphs" fill="#000">PO13862153537</text>
<text x="779.17" y="780.8" font-size="19.6" textLength="146.13" lengthAdjust="spacingAndGlyphs" fill="#000">10-4020-000119</text>
<text x="1045.78" y="780.8" font-size="19.6" textLength="55.41" lengthAdjust="spacingAndGlyphs" fill="#000">30067</text>
<text x="1231.95" y="780.8" font-size="19.6" textLength="33.36" lengthAdjust="spacingAndGlyphs" fill="#000">282</text>
<text x="1389.11" y="780.8" font-size="19.6" textLength="11.26" lengthAdjust="spacingAndGlyphs" fill="#000">6</text>
<text x="1545.34" y="780.8" font-size="19.6" textLength="33.55" lengthAdjust="spacingAndGlyphs" fill="#000">464</text>
<text x="1736.34" y="780.8" font-size="19.6" textLength="33.55" lengthAdjust="spacingAndGlyphs" fill="#000">464</text>
<text x="118.05" y="809.8" font-size="19.6" textLength="10.31" lengthAdjust="spacingAndGlyphs" fill="#000">5</text>
<text x="198.56" y="809.8" font-size="19.6" textLength="51.02" lengthAdjust="spacingAndGlyphs" fill="#000">FALSE</text>
<text x="320.65" y="809.8" font-size="19.6" textLength="80.17" lengthAdjust="spacingAndGlyphs" fill="#000">SO43673</text>
<text x="530" y="809.8" font-size="19.6" textLength="147.69" lengthAdjust="spacingAndGlyphs" fill="#000">PO13775141242</text>
<text x="779.19" y="809.8" font-size="19.6" textLength="145.9" lengthAdjust="spacingAndGlyphs" fill="#000">10-4020-000618</text>
<text x="1045.14" y="809.8" font-size="19.6" textLength="55.63" lengthAdjust="spacingAndGlyphs" fill="#000">29844</text>
<text x="1232.33" y="809.8" font-size="19.6" textLength="32.78" lengthAdjust="spacingAndGlyphs" fill="#000">275</text>
<text x="1389.29" y="809.8" font-size="19.6" textLength="11.22" lengthAdjust="spacingAndGlyphs" fill="#000">2</text>
<text x="1546.07" y="809.8" font-size="19.6" textLength="33.2" lengthAdjust="spacingAndGlyphs" fill="#000">821</text>
<text x="1737.07" y="809.8" font-size="19.6" textLength="33.2" lengthAdjust="spacingAndGlyphs" fill="#000">821</text>
<text x="118.05" y="838.8" font-size="19.6" textLength="10.31" lengthAdjust="spacingAndGlyphs" fill="#000">5</text>
<text x="198.56" y="838.8" font-size="19.6" textLength="51.02" lengthAdjust="spacingAndGlyphs" fill="#000">FALSE</text>
<text x="320.64" y="838.8" font-size="19.6" textLength="80.39" lengthAdjust="spacingAndGlyphs" fill="#000">SO43674</text>
<text x="530" y="838.8" font-size="19.6" textLength="147.73" lengthAdjust="spacingAndGlyphs" fill="#000">PO12760141756</text>
<text x="779.19" y="838.8" font-size="19.6" textLength="145.94" lengthAdjust="spacingAndGlyphs" fill="#000">10-4020-000083</text>
<text x="1045.54" y="838.8" font-size="19.6" textLength="55.52" lengthAdjust="spacingAndGlyphs" fill="#000">29596</text>
<text x="1231.95" y="838.8" font-size="19.6" textLength="33.36" lengthAdjust="spacingAndGlyphs" fill="#000">282</text>
<text x="1389.11" y="838.8" font-size="19.6" textLength="11.26" lengthAdjust="spacingAndGlyphs" fill="#000">6</text>
<text x="1545.87" y="838.8" font-size="19.6" textLength="33.29" lengthAdjust="spacingAndGlyphs" fill="#000">458</text>
<text x="1736.87" y="838.8" font-size="19.6" textLength="33.29" lengthAdjust="spacingAndGlyphs" fill="#000">458</text>
<text x="118.05" y="867.8" font-size="19.6" textLength="10.31" lengthAdjust="spacingAndGlyphs" fill="#000">5</text>
<text x="198.56" y="867.8" font-size="19.6" textLength="51.02" lengthAdjust="spacingAndGlyphs" fill="#000">FALSE</text>
<text x="320.65" y="867.8" font-size="19.6" textLength="79.66" lengthAdjust="spacingAndGlyphs" fill="#000">SO43675</text>
<text x="530" y="867.8" font-size="19.6" textLength="147.85" lengthAdjust="spacingAndGlyphs" fill="#000">PO12412186464</text>
<text x="779.19" y="867.8" font-size="19.6" textLength="146.11" lengthAdjust="spacingAndGlyphs" fill="#000">10-4020-000670</text>
<text x="1045.49" y="867.8" font-size="19.6" textLength="55.71" lengthAdjust="spacingAndGlyphs" fill="#000">29827</text>
<text x="1231.72" y="867.8" font-size="19.6" textLength="33.6" lengthAdjust="spacingAndGlyphs" fill="#000">277</text>
<text x="1389.52" y="867.8" font-size="19.6" textLength="10.82" lengthAdjust="spacingAndGlyphs" fill="#000">3</text>
<text x="1546.01" y="867.8" font-size="19.6" textLength="33.25" lengthAdjust="spacingAndGlyphs" fill="#000">631</text>
<text x="1737.01" y="867.8" font-size="19.6" textLength="33.25" lengthAdjust="spacingAndGlyphs" fill="#000">631</text>
<text x="118.05" y="896.8" font-size="19.6" textLength="10.31" lengthAdjust="spacingAndGlyphs" fill="#000">5</text>
<text x="198.56" y="896.8" font-size="19.6" textLength="51.02" lengthAdjust="spacingAndGlyphs" fill="#000">FALSE</text>
<text x="320.65" y="896.8" font-size="19.6" textLength="80.26" lengthAdjust="spacingAndGlyphs" fill="#000">SO43676</text>
<text x="529.96" y="896.8" font-size="19.6" textLength="147.86" lengthAdjust="spacingAndGlyphs" fill="#000">PO11861165059</text>
<text x="779.19" y="896.8" font-size="19.6" textLength="146.22" lengthAdjust="spacingAndGlyphs" fill="#000">10-4020-000017</text>
<text x="1045.75" y="896.8" font-size="19.6" textLength="55.44" lengthAdjust="spacingAndGlyphs" fill="#000">29811</text>
<text x="1232.33" y="896.8" font-size="19.6" textLength="32.78" lengthAdjust="spacingAndGlyphs" fill="#000">275</text>
<text x="1389.95" y="896.8" font-size="19.6" textLength="10.31" lengthAdjust="spacingAndGlyphs" fill="#000">5</text>
<text x="1546.38" y="896.8" font-size="19.6" textLength="32.73" lengthAdjust="spacingAndGlyphs" fill="#000">755</text>
<text x="1737.38" y="896.8" font-size="19.6" textLength="32.73" lengthAdjust="spacingAndGlyphs" fill="#000">755</text>
<text x="118.05" y="925.8" font-size="19.6" textLength="10.31" lengthAdjust="spacingAndGlyphs" fill="#000">5</text>
<text x="198.56" y="925.8" font-size="19.6" textLength="51.02" lengthAdjust="spacingAndGlyphs" fill="#000">FALSE</text>
<text x="320.64" y="925.8" font-size="19.6" textLength="80.44" lengthAdjust="spacingAndGlyphs" fill="#000">SO43677</text>
<text x="529.98" y="925.8" font-size="19.6" textLength="147.75" lengthAdjust="spacingAndGlyphs" fill="#000">PO11049174786</text>
<text x="779.19" y="925.8" font-size="19.6" textLength="146.11" lengthAdjust="spacingAndGlyphs" fill="#000">10-4020-000679</text>
<text x="1045.14" y="925.8" font-size="19.6" textLength="55.63" lengthAdjust="spacingAndGlyphs" fill="#000">29824</text>
<text x="1231.9" y="925.8" font-size="19.6" textLength="33.26" lengthAdjust="spacingAndGlyphs" fill="#000">278</text>
<text x="1389.11" y="925.8" font-size="19.6" textLength="11.26" lengthAdjust="spacingAndGlyphs" fill="#000">6</text>
<text x="1546" y="925.8" font-size="19.6" textLength="33.17" lengthAdjust="spacingAndGlyphs" fill="#000">556</text>
<text x="1737" y="925.8" font-size="19.6" textLength="33.17" lengthAdjust="spacingAndGlyphs" fill="#000">556</text>
</g>
</g>
<g id="v-scrollbar">
<rect x="1889" y="324" width="31" height="606" fill="#f5f5f5"/>
<path d="M1899 340.5 L1905 332.8 L1911 340.5 Z" fill="#7a7a7a" stroke="#7a7a7a" stroke-width="2" stroke-linejoin="round"/>
<rect x="1899" y="350" width="12.2" height="25.6" fill="#7f7f7f" rx="6.1"/>
<path d="M1899.3 913.8 L1905.2 921.3 L1911 913.8 Z" fill="#7a7a7a" stroke="#7a7a7a" stroke-width="2" stroke-linejoin="round"/>
</g>
<g id="sheet-tabs">
<rect x="0" y="927" width="1889" height="48" fill="#f0f0f0"/>
<rect x="1889" y="927" width="31" height="48" fill="#f0f0f0"/>
<path d="M42.6 944.8 L36.3 950.5 L42.6 956.2" fill="none" stroke="#b9b9b9" stroke-width="1.4" stroke-linecap="round" stroke-linejoin="round"/>
<path d="M85 944.8 L91.3 950.5 L85 956.2" fill="none" stroke="#444" stroke-width="1.4" stroke-linecap="round" stroke-linejoin="round"/>
<text x="181.58" y="960" font-size="21.22" textLength="222.25" lengthAdjust="spacingAndGlyphs" fill="#333">Purchasing ShipMethod</text>
<line x1="424.3" y1="937.5" x2="424.3" y2="963.8" stroke="#d2d2d2" stroke-width="1"/>
<text x="445.4" y="960" font-size="21.22" textLength="178.45" lengthAdjust="spacingAndGlyphs" fill="#333">Sales SalesTerritory</text>
<line x1="645.5" y1="937.5" x2="645.5" y2="963.8" stroke="#d2d2d2" stroke-width="1"/>
<path d="M651.3 927 H901 V962.8 Q901 968.8 895 968.8 H657.3 Q651.3 968.8 651.3 962.8 Z" fill="#fff"/>
<text x="663.96" y="955.6" font-size="19.77" textLength="225.32" lengthAdjust="spacingAndGlyphs" class="b" fill="#1f1f1f">Sales SalesOrderHeader</text>
<rect x="664.5" y="962" width="224" height="3" fill="#107c41" rx="1.5"/>
<line x1="908" y1="937.5" x2="908" y2="963.8" stroke="#d2d2d2" stroke-width="1"/>
<defs><linearGradient id="fd" x1="0" x2="1" y1="0" y2="0"><stop offset="0.8" stop-color="#f0f0f0" stop-opacity="0"/><stop offset="1" stop-color="#f0f0f0"/></linearGradient><clipPath id="tc"><rect x="920" y="930" width="118" height="40"/></clipPath></defs>
<text x="929.6" y="960" font-size="21.22" textLength="208.58" lengthAdjust="spacingAndGlyphs" fill="#333" clip-path="url(#tc)">Sales SalesOrderDetail</text>
<rect x="1000" y="935" width="39" height="32" fill="url(#fd)"/>
<circle cx="1057" cy="950.4" r="1.6" fill="#444"/>
<circle cx="1061.3" cy="950.4" r="1.6" fill="#444"/>
<circle cx="1065.6" cy="950.4" r="1.6" fill="#444"/>
<path d="M1101.3 950.3 H1115.8 M1108.5 943 V957.5" fill="none" stroke="#444" stroke-width="1.4"/>
<circle cx="1156.3" cy="944.5" r="1.4" fill="#b0b0b0"/>
<circle cx="1156.3" cy="950.5" r="1.4" fill="#b0b0b0"/>
<circle cx="1156.3" cy="956.5" r="1.4" fill="#b0b0b0"/>
<rect x="1182.5" y="937.5" width="707.5" height="26.5" fill="#f7f7f7" rx="8"/>
<path d="M1198.6 944.5 L1189.6 950.6 L1198.6 956.7 Z" fill="#6f6f6f" stroke="#6f6f6f" stroke-width="1.2" stroke-linejoin="round"/>
<rect x="1364" y="945" width="376" height="12" fill="#707070" rx="6"/>
<path d="M1875 944.5 L1884 950.6 L1875 956.7 Z" fill="#6f6f6f" stroke="#6f6f6f" stroke-width="1.2" stroke-linejoin="round"/>
</g>
<g id="status-bar">
<rect x="0" y="975" width="1920" height="33" fill="#f3f3f3"/>
<line x1="0" y1="975.2" x2="1920" y2="975.2" stroke="#d2d2d2" stroke-width="1"/>
<text x="9.29" y="998" font-size="15.99" textLength="42.74" lengthAdjust="spacingAndGlyphs" fill="#444">Ready</text>
<g fill="none" stroke="#444" stroke-width="1.3" stroke-linecap="round"><path d="M86.5 984.3 A8 8 0 1 0 95 999.8" stroke-dasharray="3.2 2.6"/><path d="M90.3 982.3 V991 M87.2 988 L90.3 991.2 L93.4 988 M94.3 987.8 H97.5"/><path d="M94.5 994 L101.8 1001.5 M101.8 994 L94.5 1001.5"/></g>
<text x="107.97" y="998" font-size="15.99" textLength="165.7" lengthAdjust="spacingAndGlyphs" fill="#444">Accessibility: Investigate</text>
<rect x="1475" y="976" width="60" height="32" fill="#dcdcdc"/>
<g fill="none" stroke="#333" stroke-width="1.8"><rect x="1495.5" y="982.6" width="17.6" height="17.4" fill="#ececec"/><path d="M1501.4 982.6 V1000 M1507.2 982.6 V1000 M1495.5 988.4 H1513.1 M1495.5 994.2 H1513.1"/></g>
<g fill="none" stroke="#333" stroke-width="1.7"><rect x="1555.4" y="982.6" width="19.2" height="17.4"/><rect x="1559.9" y="985.3" width="10.2" height="11.8" stroke-width="1.4"/><path d="M1562.3 988.4 H1567.8 M1562.3 991.3 H1567.8 M1562.3 994.2 H1567.8" stroke-width="1.2"/></g>
<g fill="none" stroke="#333" stroke-width="1.7"><rect x="1615.2" y="982.6" width="19.4" height="17.4"/><path d="M1621.6 982.6 V992.4 H1627.6 V982.6" stroke-width="1.4"/><path d="M1615.2 995.6 H1634.6" stroke-width="1"/></g>
<line x1="1663.2" y1="991.5" x2="1674.3" y2="991.5" stroke="#444" stroke-width="1.3"/>
<line x1="1683" y1="991.8" x2="1830.5" y2="991.8" stroke="#c6c6c6" stroke-width="1.6"/>
<rect x="1753" y="983.3" width="7.7" height="16.2" fill="#5f5f5f" rx="1"/>
<path d="M1839.3 991.8 H1850.5 M1844.9 986.2 V997.4" fill="none" stroke="#444" stroke-width="1.3"/>
<text x="1869.31" y="998" font-size="15.99" textLength="39.94" lengthAdjust="spacingAndGlyphs" fill="#444">100%</text>
</g>
<g id="watermark">
<g opacity="0.5" fill="#cdcdcd">
<g transform="translate(1071.5 953.8) scale(0.725 0.8)"><text x="0" y="0" font-size="100" class="b dj" direction="rtl" fill="#cdcdcd" stroke="#cdcdcd" stroke-width="5" stroke-linejoin="round">نفذلي</text></g>
<text x="860.01" y="1000" font-size="27" textLength="200.85" lengthAdjust="spacingAndGlyphs" class="b dj" fill="#cdcdcd">nafezly.com</text>
</g>
</g>
</svg>
</body></html>
